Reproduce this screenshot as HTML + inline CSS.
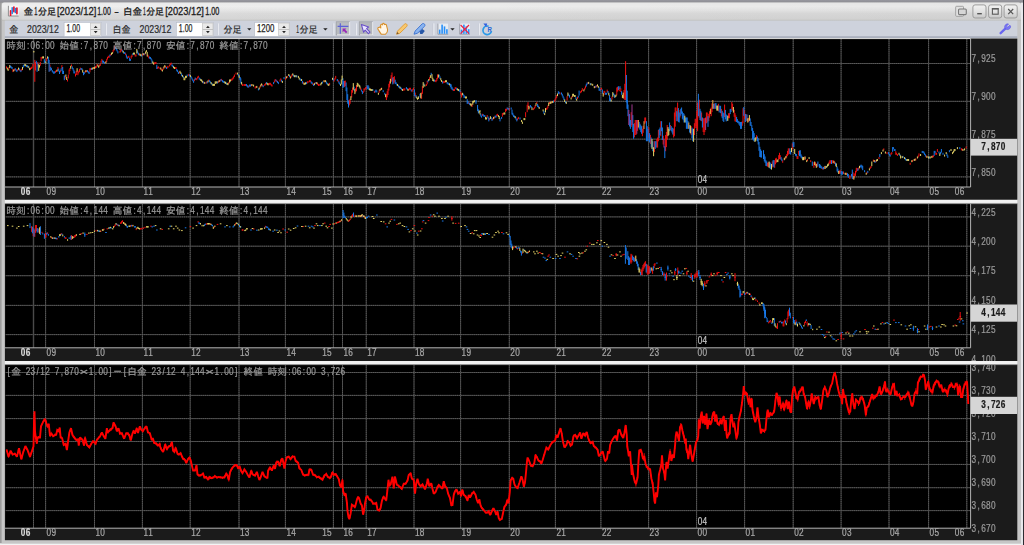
<!DOCTYPE html>
<html lang="ja"><head><meta charset="utf-8"><title>金1分足[2023/12]1.00 - 白金1分足[2023/12]1.00</title>
<style>
html,body{margin:0;padding:0;background:#f2f2f2;width:1024px;height:545px;overflow:hidden}
body{font-family:"Liberation Sans","IPAGothic",sans-serif}
svg{display:block}
#w{position:absolute;left:0;top:0;width:1024px;height:545px;overflow:hidden}
#b{position:absolute;left:-8px;top:-8px;width:1040px;height:561px}
text{white-space:pre}
</style></head><body>
<div id="w"><div id="b"><svg width="1040" height="561" viewBox="-8 -8 1040 561" style="position:absolute;left:0;top:0" font-family="'Liberation Mono','IPAGothic',monospace">
<defs>
<linearGradient id="gt" x1="0" y1="0" x2="0" y2="1"><stop offset="0" stop-color="#ebebeb"/><stop offset="0.22" stop-color="#efefef"/><stop offset="0.45" stop-color="#e5e5e5"/><stop offset="0.62" stop-color="#dbdbdb"/><stop offset="1" stop-color="#d5d5d5"/></linearGradient>
<linearGradient id="gb" x1="0" y1="0" x2="0" y2="1"><stop offset="0" stop-color="#f2f2f2"/><stop offset="0.5" stop-color="#e2e2e2"/><stop offset="1" stop-color="#c8c8c8"/></linearGradient>
<linearGradient id="gh" x1="0" y1="0" x2="1" y2="0"><stop offset="0" stop-color="#000" stop-opacity="0"/><stop offset="1" stop-color="#000" stop-opacity="0.03"/></linearGradient>
<linearGradient id="gtop" x1="0" y1="0" x2="0" y2="1"><stop offset="0" stop-color="#97979f"/><stop offset="1" stop-color="#8d8d92"/></linearGradient>
</defs>
<rect x="-8" y="-8" width="1040" height="561" fill="#f4f4f4"/>
<rect x="-8" y="-8" width="1029" height="551.3" fill="#9c9c9c"/>
<rect x="1.6" y="2.4" width="1019.4" height="540.9" fill="#c6c6c6"/>
<rect x="1021" y="-8" width="2" height="561" fill="#e8e8ec"/>
<rect x="-8" y="-8" width="1031" height="8.2" fill="#97979f"/><rect x="-8" y="0" width="1031" height="2.6" fill="url(#gtop)"/>
<rect x="1023" y="-8" width="9" height="561" fill="#2e2c32"/>
<rect x="1.8" y="2.5" width="1019.2" height="18" rx="2.5" fill="url(#gt)"/>

<rect x="1.8" y="2.5" width="1019.2" height="18" rx="2.5" fill="url(#gh)"/>
<rect x="1.8" y="19.8" width="1019.2" height="0.9" fill="#bdbdb8"/>
<rect x="4.8" y="20.6" width="1012.5" height="17.6" fill="#ced2dc"/>
<rect x="4.8" y="36.2" width="1012.5" height="1.9" fill="#aab0be"/>
<rect x="8.2" y="5.6" width="10.4" height="10.4" fill="#f6f6f6"/>
<path d="M8.4 5.8 V16 H18.6" fill="none" stroke="#8e8e8e" stroke-width="1"/>
<path d="M10.6 10.8 V15.2 M13.9 7 V11.6 M16.9 8 V13.6" stroke="#e8102a" stroke-width="1.7" stroke-linecap="round"/>
<path d="M12.2 7.8 V13.4 M15.4 8.6 V12.6" stroke="#2080e0" stroke-width="1.5" stroke-linecap="round"/>
<text fill="#1c1c1c" stroke="#1c1c1c" stroke-width="0.3" font-family="'Liberation Sans','IPAGothic',sans-serif"><tspan x="23.7" y="14.7" font-size="9.7" textLength="9.3" lengthAdjust="spacingAndGlyphs">金</tspan><tspan x="34.3" y="15.0" font-size="10.6" textLength="3.2" lengthAdjust="spacingAndGlyphs">1</tspan><tspan x="38.0" y="14.7" font-size="9.7" textLength="18.0" lengthAdjust="spacingAndGlyphs">分足</tspan><tspan x="57.0" y="15.0" font-size="10.6" textLength="39.3" lengthAdjust="spacingAndGlyphs">[2023/12]</tspan><tspan x="97.2" y="15.0" font-size="10.6" textLength="13.7" lengthAdjust="spacingAndGlyphs">1.00</tspan> <tspan x="114.2" y="15.0" font-size="10.6" textLength="4.6" lengthAdjust="spacingAndGlyphs">-</tspan> <tspan x="123.0" y="14.7" font-size="9.7" textLength="19.0" lengthAdjust="spacingAndGlyphs">白金</tspan><tspan x="143.1" y="15.0" font-size="10.6" textLength="2.8" lengthAdjust="spacingAndGlyphs">1</tspan><tspan x="146.2" y="14.7" font-size="9.7" textLength="17.8" lengthAdjust="spacingAndGlyphs">分足</tspan><tspan x="165.2" y="15.0" font-size="10.6" textLength="38.7" lengthAdjust="spacingAndGlyphs">[2023/12]</tspan><tspan x="205.2" y="15.0" font-size="10.6" textLength="14.2" lengthAdjust="spacingAndGlyphs">1.00</tspan></text>
<rect x="972.9" y="4.9" width="13.1" height="13.1" rx="2.2" fill="url(#gb)" stroke="#9c9c9c" stroke-width="1"/>
<rect x="988.6" y="4.9" width="13.1" height="13.1" rx="2.2" fill="url(#gb)" stroke="#9c9c9c" stroke-width="1"/>
<rect x="1004.1" y="4.9" width="13.1" height="13.1" rx="2.2" fill="url(#gb)" stroke="#9c9c9c" stroke-width="1"/>
<rect x="977.2" y="13" width="4.6" height="1.4" fill="#555"/>
<rect x="992.4" y="8.8" width="5.8" height="5.4" fill="none" stroke="#5a5a5a" stroke-width="1.1"/><rect x="991.9" y="8" width="6.8" height="1.4" fill="#5a5a5a"/>
<path d="M1008.2 9 L1013.2 14.2 M1013.2 9 L1008.2 14.2" stroke="#555" stroke-width="1.2"/>
<rect x="955.7" y="6.3" width="7.8" height="10" rx="0.8" fill="#e2e2e2" stroke="#9a9a9a" stroke-width="0.9"/>
<rect x="958.5" y="9" width="7.8" height="5.6" rx="1" fill="#d6d6d6" stroke="#7a7a7a" stroke-width="1.1"/>
<text fill="#2a2a2a" stroke="#2a2a2a" stroke-width="0.2" font-family="'Liberation Sans','IPAGothic',sans-serif"><tspan x="9.3" y="32.9" font-size="9.7" textLength="9.0" lengthAdjust="spacingAndGlyphs">金</tspan> <tspan x="27.1" y="33.1" font-size="10.6" textLength="31.7" lengthAdjust="spacingAndGlyphs">2023/12</tspan></text>
<rect x="64.10000000000001" y="22.4" width="37.40" height="13.9" fill="#ffffff" stroke="#b4b9c6" stroke-width="0.6"/>
<text fill="#1e1e1e" stroke="#1e1e1e" stroke-width="0.25" font-family="'Liberation Sans','IPAGothic',sans-serif"><tspan x="66.5" y="32.0" font-size="10.2" textLength="13.5" lengthAdjust="spacingAndGlyphs">1.00</tspan></text>
<rect x="90.60000000000001" y="23.1" width="10.00" height="12.5" fill="#e9e9e9" stroke="#c4c4c4" stroke-width="0.7"/><rect x="90.60000000000001" y="29" width="10.00" height="0.9" fill="#bdbdbd"/><path d="M93.8 28.0 L95.7 25.7 L97.60000000000001 28.0Z M93.8 31.0 L95.7 33.3 L97.60000000000001 31.0Z" fill="#2a2a2a"/>
<rect x="105.60000000000001" y="23.4" width="1.2" height="11.8" fill="#eef0f5"/><rect x="105.10000000000001" y="23.4" width="0.5" height="11.8" fill="#bcc0cc"/>
<text fill="#2a2a2a" stroke="#2a2a2a" stroke-width="0.2" font-family="'Liberation Sans','IPAGothic',sans-serif"><tspan x="112.4" y="32.9" font-size="9.7" textLength="18.0" lengthAdjust="spacingAndGlyphs">白金</tspan> <tspan x="139.5" y="33.1" font-size="10.6" textLength="31.8" lengthAdjust="spacingAndGlyphs">2023/12</tspan></text>
<rect x="176.29999999999998" y="22.4" width="37.20" height="13.9" fill="#ffffff" stroke="#b4b9c6" stroke-width="0.6"/>
<text fill="#1e1e1e" stroke="#1e1e1e" stroke-width="0.25" font-family="'Liberation Sans','IPAGothic',sans-serif"><tspan x="178.8" y="32.0" font-size="10.2" textLength="13.6" lengthAdjust="spacingAndGlyphs">1.00</tspan></text>
<rect x="202.6" y="23.1" width="10.40" height="12.5" fill="#e9e9e9" stroke="#c4c4c4" stroke-width="0.7"/><rect x="202.6" y="29" width="10.40" height="0.9" fill="#bdbdbd"/><path d="M205.99999999999997 28.0 L207.89999999999998 25.7 L209.79999999999998 28.0Z M205.99999999999997 31.0 L207.89999999999998 33.3 L209.79999999999998 31.0Z" fill="#2a2a2a"/>
<rect x="217.6" y="23.4" width="1.2" height="11.8" fill="#eef0f5"/><rect x="217.1" y="23.4" width="0.5" height="11.8" fill="#bcc0cc"/>
<text fill="#2a2a2a" stroke="#2a2a2a" stroke-width="0.2" font-family="'Liberation Sans','IPAGothic',sans-serif"><tspan x="223.6" y="32.9" font-size="9.7" textLength="18.0" lengthAdjust="spacingAndGlyphs">分足</tspan></text>
<path d="M247.2 28.2 H251.4 L249.3 30.599999999999998Z" fill="#222"/>
<rect x="254.7" y="22.4" width="34.80" height="13.9" fill="#ffffff" stroke="#b4b9c6" stroke-width="0.6"/>
<text fill="#1e1e1e" stroke="#1e1e1e" stroke-width="0.25" font-family="'Liberation Sans','IPAGothic',sans-serif"><tspan x="257.0" y="31.9" font-size="10.2" textLength="17.4" lengthAdjust="spacingAndGlyphs">1200</tspan></text>
<rect x="278.59999999999997" y="23.1" width="10.60" height="12.5" fill="#e9e9e9" stroke="#c4c4c4" stroke-width="0.7"/><rect x="278.59999999999997" y="29" width="10.60" height="0.9" fill="#bdbdbd"/><path d="M282.1 28.0 L284.0 25.7 L285.9 28.0Z M282.1 31.0 L284.0 33.3 L285.9 31.0Z" fill="#2a2a2a"/>
<text fill="#2a2a2a" stroke="#2a2a2a" stroke-width="0.2" font-family="'Liberation Sans','IPAGothic',sans-serif"><tspan x="296.2" y="33.1" font-size="10.6" textLength="2.8" lengthAdjust="spacingAndGlyphs">1</tspan><tspan x="299.6" y="32.9" font-size="9.7" textLength="18.0" lengthAdjust="spacingAndGlyphs">分足</tspan></text>
<path d="M323.2 28.2 H327.6 L325.4 30.599999999999998Z" fill="#222"/>
<rect x="333.2" y="23.4" width="1.2" height="11.8" fill="#eef0f5"/><rect x="332.7" y="23.4" width="0.5" height="11.8" fill="#bcc0cc"/>
<rect x="336.2" y="21.8" width="13.2" height="13.2" fill="#b9bcc0" stroke="#9a9ca2" stroke-width="0.7"/>
<rect x="337" y="34.4" width="12.6" height="0.9" fill="#eef0f4"/><rect x="349.2" y="22" width="0.9" height="13" fill="#eef0f4"/>
<path d="M340.3 23.2 V33.8 M337.6 26.4 H348.4" stroke="#5a60d8" stroke-width="1.1" fill="none"/>
<path d="M342.6 28.6 H346.4 L345.2 29.8 L347.4 32 L346 33.2 L343.9 31 L342.6 32.2Z" fill="#9a28b8"/>
<rect x="355.59999999999997" y="23.4" width="1.2" height="11.8" fill="#eef0f5"/><rect x="355.09999999999997" y="23.4" width="0.5" height="11.8" fill="#bcc0cc"/>
<rect x="359.2" y="21.8" width="13.2" height="13.2" fill="#b4b7bc" stroke="#9a9ca2" stroke-width="0.7"/>
<rect x="360" y="34.4" width="12.6" height="0.9" fill="#eef0f4"/><rect x="372.2" y="22" width="0.9" height="13" fill="#eef0f4"/>
<path d="M361.4 24.6 L368.6 27 L366.6 28.6 L370 32.2 L368.4 33.6 L365.2 30.2 L363.6 32.2Z" fill="#e8e4ff" stroke="#6a50c8" stroke-width="1.1" stroke-linejoin="round"/>
<path d="M378.6 27.6 C379.6 26.6 380.4 27.2 380.8 28 L380.6 25.2 C380.8 24 382.2 24 382.4 25 L382.6 24 C383 23 384.4 23.2 384.4 24.4 L384.8 24.6 C385.6 24 386.6 24.6 386.6 25.8 L387.6 29.6 C387.8 31.6 386.8 33.2 385.6 34.2 H381.2 C380 32.6 379 30.6 377.8 29 C377.6 28.4 378 27.8 378.6 27.6Z" fill="#fff6e6" stroke="#d8902c" stroke-width="1.1" stroke-linejoin="round"/>
<path d="M396.6 34.2 L397.4 31.2 L404.4 24.2 C405.2 23.4 406.4 23.6 406.8 24.4 C407.4 25.2 407.2 26 406.6 26.6 L399.6 33.4 Z" fill="#f8c870" stroke="#e09a30" stroke-width="0.9" stroke-linejoin="round"/>
<path d="M396.6 34.2 L397.2 32 L398.8 33.6Z" fill="#705030"/>
<path d="M414 34.2 L415.2 31 L422 24 C422.8 23.2 424 23.4 424.6 24.2 C425.2 25 425 25.8 424.4 26.4 L417.6 33.2 Z" fill="#8ab4f0" stroke="#3a70d0" stroke-width="0.9" stroke-linejoin="round"/>
<path d="M419.6 31.6 L422.4 29 L424.8 31 L422.4 34 H420.2Z" fill="#2858a8"/>
<rect x="433.2" y="23.4" width="1.2" height="11.8" fill="#eef0f5"/><rect x="432.7" y="23.4" width="0.5" height="11.8" fill="#bcc0cc"/>
<rect x="437.6" y="23.6" width="10.4" height="10.6" fill="#e8ecf2"/><path d="M437.90000000000003 23.6 V34.2 H448.20000000000005" fill="none" stroke="#8a8e98" stroke-width="0.8"/><rect x="438.90" y="29.60" width="1.6" height="4.2" fill="#2890f8"/><rect x="441.30" y="24.60" width="1.6" height="9.2" fill="#2890f8"/><rect x="443.70" y="26.40" width="1.6" height="7.4" fill="#2890f8"/><rect x="446.10" y="29.20" width="1.6" height="4.6" fill="#2890f8"/>
<path d="M450.3 28.2 H454.7 L452.5 30.599999999999998Z" fill="#222"/>
<rect x="459.4" y="23.6" width="10.4" height="10.6" fill="#e8ecf2"/><path d="M459.7 23.6 V34.2 H470.0" fill="none" stroke="#8a8e98" stroke-width="0.8"/><rect x="460.70" y="29.60" width="1.6" height="4.2" fill="#2890f8"/><rect x="463.10" y="24.60" width="1.6" height="9.2" fill="#2890f8"/><rect x="465.50" y="26.40" width="1.6" height="7.4" fill="#2890f8"/><rect x="467.90" y="29.20" width="1.6" height="4.6" fill="#2890f8"/>
<path d="M460.6 25 L469 33.6 M469 25 L460.6 33.6" stroke="#f02040" stroke-width="1.2"/>
<rect x="478.59999999999997" y="23.4" width="1.2" height="11.8" fill="#eef0f5"/><rect x="478.09999999999997" y="23.4" width="0.5" height="11.8" fill="#bcc0cc"/>
<path d="M488.6 26.2 A4.3 4.3 0 1 0 491.4 31.6" fill="none" stroke="#2a9ae8" stroke-width="1.7"/>
<path d="M483.4 23.4 L487.2 23.6 L486.2 27.2Z" fill="#3060e0"/>
<text x="487.6" y="31.8" font-size="6.6" fill="#2868d8" font-weight="bold" font-family="'Liberation Sans','IPAGothic',sans-serif" textLength="4.4" lengthAdjust="spacingAndGlyphs">R</text>
<path d="M1000.6 33.2 L1005.6 28.4" stroke="#6a66f0" stroke-width="2.3" stroke-linecap="round"/>
<path d="M1009.8 25.2 L1007.8 27.2 L1006.6 26 L1008.6 24 A3 3 0 0 0 1004.8 27.8 A3 3 0 0 0 1009.8 28.6 A3 3 0 0 0 1010.6 26Z" fill="#7a76f4" stroke="#5a56e0" stroke-width="0.6"/>
<rect x="4.9" y="199.6" width="1012.4" height="3.3" fill="#f2f2f2"/>
<rect x="4.9" y="360.9" width="1012.4" height="3.3" fill="#f2f2f2"/>

<rect x="4.9" y="38.6" width="1012.40" height="161.10" fill="#1b1b1b"/>
<rect x="5.5" y="38.6" width="965.10" height="148.40" fill="#000"/>
<clipPath id="cp0"><rect x="5.5" y="38.6" width="965.10" height="148.40"/></clipPath>
<g clip-path="url(#cp0)">
<path d="M5.5 63.5H970.6M5.5 101.35H970.6M5.5 139.15H970.6M5.5 176.9H970.6M33.5 38.6V187.0M45.6 38.6V187.0M94.5 38.6V187.0M142.4 38.6V187.0M190.2 38.6V187.0M239.0 38.6V187.0M285.4 38.6V187.0M333.4 38.6V187.0M342.5 38.6V187.0M366.25 38.6V187.0M414.0 38.6V187.0M460.6 38.6V187.0M509.3 38.6V187.0M555.4 38.6V187.0M600.9 38.6V187.0M648.6 38.6V187.0M696.6 38.6V187.0M744.6 38.6V187.0M793.2 38.6V187.0M841.1 38.6V187.0M889.0 38.6V187.0M928.6 38.6V187.0M966.8 38.6V187.0" stroke="#404040" stroke-width="1.0" fill="none"/>
<path d="M5.5 63.5H970.6M5.5 101.35H970.6M5.5 139.15H970.6M5.5 176.9H970.6M33.5 38.6V187.0M45.6 38.6V187.0M94.5 38.6V187.0M142.4 38.6V187.0M190.2 38.6V187.0M239.0 38.6V187.0M285.4 38.6V187.0M333.4 38.6V187.0M342.5 38.6V187.0M366.25 38.6V187.0M414.0 38.6V187.0M460.6 38.6V187.0M509.3 38.6V187.0M555.4 38.6V187.0M600.9 38.6V187.0M648.6 38.6V187.0M696.6 38.6V187.0M744.6 38.6V187.0M793.2 38.6V187.0M841.1 38.6V187.0M889.0 38.6V187.0M928.6 38.6V187.0M966.8 38.6V187.0" stroke="#606060" stroke-width="0.9" stroke-dasharray="1.05 1.05" fill="none"/>
<path d="M33.5 38.6V187.0" stroke="#4a4a4a" stroke-width="1.4" fill="none"/>
</g>
<g clip-path="url(#cp0)" fill="none" stroke-width="1.0">
<path stroke="#f01010" d="M6.5 66.4V68.4M8.9 67.3V69.5M12.9 68.9V72.1M14.5 68.7V70.7M17.7 69.0V71.0M20.1 69.4V71.4M21.7 68.9V70.9M30.5 67.8V69.8M31.3 67.0V69.0M32.1 66.4V68.4M32.9 63.9V66.6M34.8 59.9V81.8M35.5 62.0V70.5M37.9 62.0V66.5M40.3 62.0V65.8M41.1 57.0V61.3M41.9 56.8V58.8M46.7 57.9V61.1M49.9 64.6V71.3M55.5 70.8V72.8M56.3 70.0V72.0M57.9 67.0V69.7M60.3 70.1V72.4M61.9 65.1V69.1M65.1 75.9V78.8M67.5 79.3V81.5M68.3 74.5V78.5M69.1 69.5V74.3M69.9 68.0V71.1M71.5 64.5V66.5M75.5 73.6V76.5M76.3 70.9V75.0M77.9 70.6V75.2M78.7 71.4V73.4M79.5 69.0V72.1M80.3 67.6V69.7M85.1 70.9V72.9M86.7 70.1V72.1M89.9 68.2V72.3M90.7 68.1V70.1M93.1 67.4V69.4M95.5 66.1V68.1M96.3 65.8V67.8M97.1 63.9V66.0M99.5 64.6V66.6M100.3 63.9V65.9M101.1 60.8V63.6M101.9 58.9V61.5M105.1 61.7V63.7M106.7 58.8V62.1M107.5 57.0V59.5M108.3 55.8V57.8M109.1 55.8V57.8M110.7 53.9V55.9M113.1 50.1V52.5M113.9 48.9V50.9M114.7 45.8V49.1M120.0 50.8V52.8M120.8 50.0V52.0M121.6 48.9V50.9M125.6 53.2V55.2M128.0 56.1V58.1M128.8 55.8V57.8M131.2 55.8V58.7M132.0 54.5V57.1M135.2 54.4V56.5M136.0 54.5V56.5M139.2 53.2V55.2M142.4 53.7V55.7M144.8 53.2V55.2M148.0 54.7V57.1M148.8 56.4V58.4M154.4 62.4V64.4M155.2 62.0V64.0M156.0 62.0V64.0M157.6 66.8V68.8M158.4 66.4V68.4M160.0 67.2V69.2M161.6 68.8V70.8M163.2 67.5V69.9M165.6 65.9V67.9M167.2 66.5V68.5M168.0 65.8V67.8M169.6 64.5V66.5M170.4 63.3V65.3M171.2 62.6V64.6M175.2 67.0V69.0M176.0 67.0V69.0M179.2 71.6V73.6M188.8 73.9V75.9M194.4 79.1V81.2M196.0 78.0V80.0M196.8 78.2V80.2M197.6 76.6V78.6M198.4 75.8V77.8M204.0 81.7V83.7M206.4 81.5V83.5M208.8 79.5V81.5M218.4 80.8V82.8M220.0 79.7V81.7M221.6 78.9V80.9M228.8 81.9V83.9M231.2 78.9V80.9M232.0 78.5V80.5M232.8 77.6V79.6M233.6 76.4V78.6M234.4 74.5V77.1M236.0 72.6V74.6M242.4 83.8V86.0M244.0 84.0V86.0M244.8 84.0V86.0M245.6 84.0V86.0M248.8 85.4V87.4M251.2 84.2V86.2M255.2 86.5V88.5M256.0 86.2V88.2M260.0 85.9V88.2M262.4 84.4V86.4M264.8 84.0V86.0M265.6 82.9V84.9M268.8 83.2V85.2M269.6 82.8V84.8M270.4 82.8V84.8M271.2 83.9V85.9M272.0 84.6V86.6M274.4 80.5V82.6M275.2 79.0V81.2M276.8 80.2V82.2M280.0 79.6V81.6M280.8 78.4V80.4M285.6 77.8V79.8M287.2 75.9V77.9M291.2 75.5V77.5M292.0 74.2V76.2M303.2 81.8V83.8M307.2 81.5V83.5M308.0 80.9V82.9M309.6 80.2V82.2M310.4 80.2V82.2M312.8 83.0V85.0M315.2 82.1V84.1M317.6 82.8V84.8M318.4 84.0V86.0M319.2 83.9V85.9M324.8 80.2V82.2M329.6 82.9V84.9M334.1 79.6V81.6M334.9 77.9V80.1M335.7 75.9V78.6M338.1 79.9V82.0M344.5 80.9V86.9M345.3 80.6V86.2M349.3 99.9V105.4M350.1 98.8V103.8M351.7 90.0V97.5M352.5 87.5V92.7M355.7 88.1V92.5M356.5 85.0V91.2M360.8 87.8V90.2M363.2 91.1V93.1M364.0 88.4V91.8M364.8 88.4V90.4M365.6 87.2V89.2M366.4 86.5V88.5M374.4 90.9V92.9M379.2 90.3V92.8M380.8 88.1V90.1M386.4 93.8V100.0M387.2 91.2V97.4M388.0 88.8V95.0M388.8 83.8V90.6M389.6 81.3V87.4M391.2 75.1V81.8M392.0 72.5V81.2M393.6 77.0V83.7M394.4 76.2V82.5M403.2 88.8V90.8M404.0 88.4V90.4M404.8 88.4V90.4M408.8 88.5V90.5M409.6 87.8V89.8M410.4 87.8V89.8M412.0 90.2V92.2M412.8 88.8V90.8M413.6 87.8V89.8M415.2 92.6V96.7M421.6 92.5V98.8M422.4 86.2V93.8M426.4 84.0V86.0M427.2 80.9V84.3M429.6 77.2V80.0M435.2 79.9V81.9M436.0 80.2V82.2M436.8 78.1V81.0M437.6 74.4V79.2M443.2 81.3V83.3M444.0 80.9V82.9M444.8 80.9V82.9M453.6 89.0V91.0M454.4 89.0V91.0M455.2 87.1V89.2M456.0 87.1V89.1M460.8 91.3V94.6M461.6 93.5V97.5M468.8 102.1V104.1M472.0 103.8V106.9M482.4 113.8V115.9M487.2 115.0V117.5M489.6 118.2V120.2M492.8 118.1V120.1M494.4 116.4V118.4M496.8 114.3V116.3M497.6 113.8V115.8M502.4 113.1V116.7M503.2 112.9V114.9M505.6 108.8V112.2M506.4 108.8V110.8M508.0 107.7V109.7M509.6 108.1V110.1M517.6 118.3V120.3M518.4 116.9V119.0M525.6 112.2V117.3M527.2 104.8V112.2M528.0 102.2V107.2M529.6 106.6V108.6M533.6 108.1V110.1M534.4 106.8V108.8M535.2 105.0V107.5M536.8 101.9V103.9M546.3 107.9V109.9M547.1 107.5V109.5M547.9 105.3V108.2M549.5 102.2V104.2M551.9 101.2V103.2M554.3 100.0V102.0M555.1 98.8V100.8M555.9 97.4V99.7M556.7 95.0V98.1M559.9 92.5V94.5M567.1 96.2V100.5M571.9 96.2V98.2M577.5 96.8V99.0M580.7 91.2V93.2M581.5 90.2V92.2M582.3 88.1V90.9M584.7 87.7V90.0M585.5 85.6V88.4M587.9 82.2V84.2M595.1 86.0V88.0M596.7 85.2V87.2M600.8 88.3V90.3M601.6 87.8V89.8M604.0 90.9V95.1M604.8 90.9V92.9M607.2 89.6V92.4M612.0 96.5V99.6M616.8 87.5V95.3M617.6 86.8V91.6M619.2 87.5V91.2M620.8 88.3V92.0M624.0 90.0V98.8M624.8 83.8V100.0M625.6 61.2V100.0M631.2 112.2V126.9M634.4 123.1V137.3M635.2 120.0V135.0M636.0 120.0V135.0M637.6 120.0V130.8M642.4 128.8V136.2M643.2 125.8V132.8M644.8 117.5V123.9M645.6 117.5V122.5M648.8 127.5V137.5M650.4 134.9V144.0M654.4 141.2V152.1M656.8 139.1V147.5M657.6 137.5V147.5M658.4 130.0V141.3M660.8 121.2V136.2M663.2 135.7V144.5M665.6 135.0V151.2M666.4 132.0V147.1M667.2 125.0V139.3M670.4 125.0V130.0M673.6 128.8V137.5M674.4 112.5V136.2M675.2 107.5V126.7M676.0 107.5V116.5M677.6 102.5V121.2M680.0 110.0V117.5M691.2 126.2V135.0M694.4 123.2V135.0M695.2 118.8V128.2M696.0 118.8V126.2M696.8 111.0V128.6M697.6 102.5V131.2M699.2 99.7V117.7M701.6 112.5V121.2M703.2 118.2V132.0M704.0 118.8V135.0M704.8 118.0V132.1M706.4 112.5V123.3M707.2 112.5V122.5M708.8 113.8V121.2M709.6 111.2V117.7M711.2 107.5V116.2M712.0 103.4V112.1M714.4 103.6V108.8M718.4 103.8V111.2M721.4 108.9V116.4M724.6 104.5V117.0M728.6 113.2V118.2M729.4 113.2V118.2M731.8 102.0V109.5M732.6 103.8V110.6M734.2 109.9V116.8M735.0 113.2V121.4M735.8 115.3V121.7M742.2 121.4V125.8M743.0 108.2V123.3M744.6 110.4V118.8M746.2 114.2V121.3M748.6 117.8V121.9M756.6 135.1V138.9M767.5 162.8V166.5M768.3 162.2V167.0M772.3 161.4V167.4M774.7 160.2V167.8M775.5 158.5V164.3M776.3 157.8V162.8M778.7 155.2V160.1M779.5 152.8V159.0M780.3 155.2V159.4M782.7 160.2V162.8M785.1 157.0V159.5M786.7 154.1V157.5M787.5 150.9V155.9M788.3 148.4V154.6M789.1 148.4V154.2M792.3 143.4V149.5M797.1 155.9V159.0M797.9 155.9V159.0M798.7 150.9V155.4M804.3 156.7V159.8M807.5 159.2V161.1M810.7 160.2V162.1M813.9 162.1V167.8M815.5 162.3V166.1M817.1 163.1V167.3M822.7 167.8V169.6M824.3 166.3V169.1M829.1 161.7V164.6M829.9 160.2V163.4M830.7 160.2V163.7M832.3 160.2V163.4M833.1 160.2V162.8M834.7 161.5V164.0M839.5 170.6V173.7M840.3 170.2V173.4M843.5 171.5V174.0M846.7 172.8V175.2M849.9 175.2V179.0M853.1 172.4V179.2M854.7 173.4V177.5M855.5 170.9V175.9M856.3 167.8V172.3M857.1 168.0V170.9M858.7 167.5V169.8M867.0 171.8V173.8M870.2 166.9V168.9M871.0 165.9V167.9M873.4 159.6V161.6M875.8 160.3V162.3M879.0 157.1V159.1M883.8 148.4V150.4M887.0 152.1V154.1M891.0 152.9V155.0M891.8 152.1V154.1M895.8 151.2V154.8M896.6 152.8V154.8M897.4 154.0V156.0M910.2 162.8V164.8M912.6 159.9V161.9M915.8 158.4V160.4M918.2 155.5V157.5M919.0 153.4V156.2M926.2 155.4V157.4M932.6 155.6V157.6M933.4 155.2V157.2M935.8 152.6V154.8M936.6 152.8V154.8M937.4 149.0V151.9M961.4 148.2V150.2M962.2 148.7V150.7M966.2 146.5V148.5"/>
<path stroke="#1878e8" d="M10.5 65.6V67.6M11.3 66.4V68.4M12.1 67.0V69.0M15.3 68.2V70.2M16.1 69.3V71.3M16.9 70.1V72.1M19.3 68.4V70.4M20.9 70.1V72.1M23.3 65.1V67.7M24.1 64.5V66.5M26.5 65.1V67.1M27.3 65.1V67.1M28.9 66.4V68.4M36.3 60.8V63.3M37.1 62.6V71.8M44.3 59.2V62.8M45.1 61.1V63.1M48.3 56.8V63.0M49.1 59.9V71.8M50.7 66.8V70.7M51.5 68.2V70.2M52.3 70.0V72.1M53.1 71.1V73.1M53.9 72.0V74.0M54.7 71.3V73.3M58.7 68.6V71.5M59.5 70.8V74.0M61.1 68.4V71.2M62.7 67.0V74.0M63.5 70.8V74.0M64.3 75.4V80.2M72.3 66.4V69.0M73.1 68.0V70.5M73.9 69.8V73.4M74.7 71.4V73.4M81.1 68.0V70.0M81.9 68.2V70.2M83.5 71.9V75.2M84.3 72.2V74.2M87.5 70.1V72.1M88.3 71.2V73.2M89.1 72.0V74.0M91.5 67.9V69.9M102.7 60.3V62.8M103.5 60.8V62.8M104.3 62.0V64.0M109.9 54.6V56.6M115.5 46.8V48.8M116.3 48.1V50.4M117.1 49.5V51.5M117.9 51.2V53.4M122.4 49.7V51.7M124.0 52.0V54.0M124.8 52.0V54.0M126.4 54.5V57.6M127.2 56.9V59.0M129.6 57.7V60.9M130.4 58.9V60.9M132.8 53.2V55.2M137.6 50.5V53.4M138.4 52.7V55.2M141.6 54.5V56.5M144.0 53.2V55.2M149.6 56.6V58.6M150.4 57.0V59.0M151.2 58.2V60.3M152.0 59.6V62.8M156.8 64.8V69.0M166.4 67.0V69.0M172.0 64.3V66.3M172.8 65.1V67.1M176.8 69.0V71.3M177.6 70.1V72.1M178.4 71.9V74.0M181.6 73.4V75.9M183.2 75.8V77.8M187.2 74.5V76.5M189.6 74.3V76.3M191.2 76.3V78.3M192.0 77.6V79.6M192.8 79.1V81.2M193.6 80.5V82.8M195.2 77.6V79.8M199.2 77.5V79.6M200.0 78.2V80.2M203.2 81.4V83.4M207.2 81.4V83.4M209.6 80.2V82.2M210.4 81.4V83.4M212.0 83.2V85.2M217.6 81.4V83.4M220.8 79.2V81.2M222.4 80.0V82.0M223.2 80.8V82.8M224.0 81.0V83.0M226.4 82.6V84.6M238.4 74.1V76.5M240.0 77.2V80.2M240.0 77.1V79.1M240.8 78.4V83.5M246.4 84.0V86.0M247.2 85.0V87.0M248.0 85.9V87.9M249.6 84.6V86.6M250.4 84.6V86.6M258.4 88.4V90.4M263.2 85.2V87.2M266.4 82.1V84.1M273.6 82.1V84.1M276.0 79.6V81.6M277.6 81.0V83.0M278.4 82.1V84.1M281.6 79.7V81.7M284.0 77.1V79.1M289.6 75.1V77.1M293.6 74.5V76.5M295.2 75.2V77.2M296.8 75.4V77.4M300.0 78.4V80.4M300.8 78.8V80.8M302.4 80.9V83.5M306.4 82.1V84.1M311.2 81.4V83.4M312.0 82.1V84.1M313.6 84.0V86.0M316.0 82.1V84.1M322.4 81.5V83.5M326.4 81.5V83.8M327.2 82.8V84.8M333.3 78.7V80.7M337.3 79.0V81.0M338.9 81.3V83.5M339.7 82.6V84.6M342.9 78.3V87.5M343.7 81.2V87.5M346.1 82.5V91.2M346.9 87.5V100.0M347.7 94.2V103.8M348.5 100.5V107.5M354.1 86.7V90.9M361.6 89.5V91.6M362.4 91.1V94.1M367.2 85.7V88.9M368.0 85.0V89.4M368.8 86.4V89.8M372.8 89.0V91.0M375.2 90.5V92.5M376.0 89.6V91.6M376.8 90.5V92.5M383.2 90.2V92.2M384.8 92.8V94.8M392.8 77.5V84.4M395.2 79.7V84.1M396.0 82.1V84.1M396.8 83.5V85.5M398.4 85.2V87.2M399.2 85.9V87.9M400.8 87.1V89.1M401.6 88.1V90.1M406.4 87.1V89.1M407.2 88.1V90.1M411.2 89.3V91.3M414.4 89.5V96.2M416.0 95.0V97.9M420.0 93.8V97.5M424.0 83.5V85.5M428.0 80.3V82.3M431.2 72.8V75.6M434.4 79.6V81.6M439.2 74.6V76.6M440.0 76.4V78.9M442.4 81.3V83.5M447.2 82.0V84.1M448.0 82.5V84.5M448.8 83.0V85.0M450.4 83.9V87.2M451.2 84.4V88.8M452.0 86.8V89.7M452.8 88.4V90.4M456.8 88.0V90.0M459.2 89.4V91.4M460.0 90.2V92.2M463.2 93.6V95.6M464.0 94.9V97.9M464.8 95.9V97.9M467.2 99.2V103.8M468.0 101.1V103.9M469.6 102.8V104.8M476.0 100.0V103.8M477.6 105.0V111.2M478.4 109.4V113.5M480.8 113.8V116.5M481.6 115.6V117.6M483.2 114.1V116.1M484.0 115.0V117.0M484.8 115.0V117.0M488.0 116.5V118.5M488.8 117.8V121.4M491.2 117.1V119.1M492.0 118.4V120.8M495.2 115.6V117.6M496.0 115.6V117.6M500.0 118.3V121.4M501.6 116.9V118.9M507.2 107.5V109.5M508.8 107.9V109.9M511.2 107.5V109.5M512.0 109.6V114.5M512.8 112.8V115.4M513.6 114.7V117.0M514.4 115.5V117.5M516.0 117.5V119.7M516.8 119.0V121.4M520.0 117.5V119.5M530.4 105.0V107.3M531.2 106.1V108.1M537.6 103.9V107.0M538.4 105.7V107.7M543.9 110.7V113.8M553.5 100.6V102.6M558.3 91.2V94.2M559.1 91.8V93.8M561.5 92.5V94.5M562.3 93.8V96.4M563.1 95.7V98.2M563.9 97.5V100.1M565.5 101.2V103.2M568.7 93.6V95.6M569.5 94.9V97.6M575.9 97.1V99.5M578.3 95.6V97.6M579.1 90.6V95.5M586.3 83.9V86.6M587.1 82.5V84.6M590.3 83.1V85.1M595.9 85.6V87.6M599.1 87.2V90.8M600.0 89.0V91.0M602.4 89.5V93.6M605.6 92.7V94.8M606.4 92.8V94.8M608.0 91.0V93.5M609.6 94.9V101.2M610.4 98.0V101.4M613.6 93.2V95.2M614.4 94.5V97.9M618.4 86.2V90.0M620.0 86.2V88.9M621.6 91.2V94.8M626.4 75.0V102.5M627.2 90.7V108.8M627.2 100.0V108.8M628.0 104.6V116.2M629.6 114.0V126.5M630.4 120.0V128.8M632.8 115.1V132.1M633.6 123.9V138.8M639.2 121.9V128.7M640.0 123.8V130.0M640.8 125.2V132.1M641.6 126.2V133.8M646.4 121.2V141.2M647.2 126.2V141.2M648.0 128.8V141.2M649.6 133.2V142.5M651.2 137.5V147.5M652.8 141.2V151.2M655.2 141.2V149.0M656.0 141.2V147.5M659.2 129.0V138.0M660.0 127.5V135.0M661.6 121.2V131.2M662.4 127.5V140.0M664.8 146.2V158.1M669.6 122.5V131.2M671.2 126.0V131.0M672.0 127.5V132.5M672.8 128.0V134.5M676.8 111.2V121.2M678.4 108.1V121.9M679.2 112.5V122.5M680.8 108.8V115.7M681.6 107.5V113.8M682.4 111.5V118.8M683.2 113.0V120.2M684.0 113.8V122.5M685.6 117.5V122.5M686.4 117.5V128.8M687.2 117.5V128.8M688.0 121.1V128.8M689.6 125.0V132.5M692.0 127.6V138.3M692.8 128.8V141.2M698.4 93.8V116.2M700.0 108.8V120.0M700.8 110.9V120.7M702.4 117.5V127.5M708.0 116.2V126.9M713.6 103.8V108.8M715.2 103.1V108.8M716.0 103.1V108.8M719.2 105.6V112.5M720.6 105.8V113.2M722.2 110.8V118.2M723.0 112.5V120.9M723.8 113.2V122.0M725.4 109.9V119.3M726.2 114.5V121.4M727.0 115.3V121.0M730.2 108.9V114.1M731.0 108.9V112.0M736.6 117.0V122.0M737.4 119.1V122.7M738.2 120.8V123.2M739.0 121.4V124.6M739.8 122.0V125.8M740.6 122.0V128.9M741.4 122.0V128.9M743.8 107.0V115.8M745.4 113.9V122.0M747.0 114.5V120.8M750.2 118.4V125.8M751.0 122.0V125.8M751.8 125.1V130.8M752.6 128.0V139.5M753.4 130.9V140.5M754.2 133.2V141.4M757.4 136.5V141.3M758.2 138.2V144.5M759.0 142.0V150.8M759.8 146.8V157.0M760.6 149.3V157.3M761.4 150.8V157.6M763.5 150.2V159.0M764.3 154.2V161.4M765.1 156.5V162.8M765.9 160.2V165.9M766.7 161.4V166.2M769.9 162.2V168.3M770.7 163.3V169.1M773.1 160.2V166.5M773.9 160.2V167.4M781.1 157.1V159.6M781.9 158.7V161.2M789.9 148.4V154.0M790.7 150.9V154.6M793.1 142.1V147.1M793.9 142.1V147.1M795.5 153.6V155.7M796.3 154.0V156.5M799.5 150.5V156.1M800.3 150.2V156.5M801.1 154.4V157.8M801.9 155.9V158.6M812.3 161.5V165.9M817.9 161.5V166.5M819.5 164.0V167.8M820.3 164.7V168.0M821.1 165.9V168.4M821.9 166.7V168.9M823.5 167.0V169.4M825.9 165.9V168.2M831.5 160.2V164.0M835.5 162.6V165.9M837.1 166.5V171.5M837.9 168.7V172.6M841.1 170.9V174.4M841.9 171.5V175.2M842.7 171.5V174.6M847.5 173.2V176.2M848.3 174.0V177.8M851.5 174.0V176.5M852.3 169.6V179.0M857.9 168.4V170.9M860.3 165.4V167.5M861.1 164.6V167.1M861.9 165.2V168.5M862.7 165.9V170.2M864.6 170.2V172.2M867.8 170.9V172.9M875.0 160.9V162.9M879.8 154.0V157.1M888.6 152.1V154.1M889.4 153.7V155.7M890.2 154.6V156.6M892.6 147.1V151.8M893.4 147.1V149.1M894.2 148.9V151.0M895.0 149.0V151.0M899.8 154.1V156.1M903.0 155.9V157.9M905.4 157.9V159.9M906.2 159.0V161.0M922.2 150.9V152.9M923.0 151.1V153.1M923.8 151.5V153.5M924.6 152.7V155.0M925.4 154.3V156.6M929.4 156.5V158.5M934.2 150.9V155.8M935.0 150.9V153.0M939.0 151.5V153.5M940.6 151.9V154.3M941.4 149.0V152.6M943.0 152.8V154.8M947.0 153.5V156.1M947.8 155.4V157.9M949.4 150.2V152.2M959.8 147.1V149.1"/>
<path stroke="#e6d468" d="M7.3 67.6V69.6M8.1 68.9V70.9M9.7 65.1V68.0M13.7 69.5V71.5M18.5 67.6V69.7M22.5 67.0V69.8M24.9 63.9V65.9M25.7 64.3V66.3M28.1 65.9V67.9M29.7 67.9V70.2M33.0 51.8h1.6M38.7 64.2V70.9M39.5 65.1V67.6M42.7 56.4V58.4M43.5 56.4V58.4M45.9 61.4V63.4M47.5 56.4V58.6M57.1 69.5V71.5M65.9 74.5V76.6M66.7 76.8V80.0M70.7 65.8V68.7M77.1 68.2V71.6M82.7 69.7V72.6M85.9 70.1V72.1M92.3 67.6V69.6M93.9 67.0V69.0M94.7 67.0V69.0M97.9 64.6V66.6M98.7 65.8V67.8M105.9 61.4V63.4M111.5 52.8V54.8M112.3 52.0V54.0M123.2 50.8V52.8M133.6 52.6V54.6M134.4 52.6V54.6M136.8 48.9V53.5M140.0 53.7V55.7M140.8 54.2V56.2M143.2 53.2V55.2M145.6 51.5V53.8M146.4 50.1V52.2M147.2 51.9V56.5M152.8 61.4V63.4M153.6 62.6V64.6M160.8 67.6V69.6M162.4 69.5V71.5M164.0 66.4V68.4M164.8 65.1V67.1M173.6 66.2V68.2M174.4 67.0V69.0M180.0 70.8V72.8M180.8 72.1V74.1M182.4 74.9V76.9M184.0 77.2V80.2M184.8 78.2V80.2M185.6 75.8V78.3M186.4 75.8V77.8M190.4 75.1V77.1M200.8 79.0V81.0M201.6 79.5V81.5M202.4 80.7V82.7M204.8 82.0V84.0M208.0 80.4V82.4M211.2 82.2V84.2M212.8 83.9V85.9M213.6 83.9V85.9M214.4 83.9V85.9M215.2 81.4V84.0M216.0 81.4V83.4M216.8 81.4V83.4M219.2 80.1V82.1M224.8 81.4V83.4M225.6 81.9V83.9M227.2 82.9V84.9M228.0 83.2V85.2M229.6 79.5V82.6M230.4 79.5V81.5M237.6 72.6V74.6M239.2 75.3V77.9M241.6 81.9V84.5M252.0 84.0V86.0M253.6 84.6V86.6M256.8 85.9V87.9M259.2 87.5V89.5M260.8 84.5V86.6M261.6 83.4V85.4M267.2 82.8V84.8M268.0 83.4V85.4M282.4 80.9V82.9M286.4 76.4V78.4M288.8 74.0V76.0M290.4 76.4V78.5M292.8 73.4V75.4M294.4 75.2V77.2M296.0 75.2V77.2M298.4 75.9V77.9M299.2 77.5V79.5M301.6 79.0V81.0M304.0 82.8V84.8M304.8 82.8V84.8M305.6 82.3V84.3M314.4 83.2V85.2M316.8 82.1V84.1M320.8 83.4V85.4M321.6 82.2V84.2M324.0 80.2V82.2M325.6 80.2V82.2M328.0 83.5V85.5M328.8 84.0V86.0M332.5 77.8V79.8M340.5 83.9V86.0M341.3 79.5V84.5M342.1 75.6V80.0M350.9 96.2V100.0M353.3 83.1V89.7M354.9 89.1V94.1M357.3 82.8V86.9M358.1 83.5V85.5M358.9 84.6V86.6M359.7 85.2V87.2M360.0 86.5V88.5M369.6 88.4V90.4M370.4 88.6V90.6M371.2 89.0V91.0M372.0 89.0V91.0M378.4 92.8V94.8M380.0 89.0V91.0M381.6 87.8V89.8M385.6 94.2V97.2M390.4 78.8V83.6M397.6 84.0V86.0M400.0 86.6V88.6M402.4 89.0V91.0M408.0 89.0V91.0M416.8 96.6V98.6M417.6 97.8V99.8M418.4 96.4V99.0M420.8 92.9V98.4M423.2 82.1V87.8M424.8 84.6V86.6M428.8 79.0V81.0M430.4 75.2V77.9M432.0 74.2V78.5M432.8 77.8V81.0M433.6 79.4V81.4M438.4 74.5V77.6M440.8 78.2V80.4M441.6 80.0V82.0M445.6 80.2V82.2M446.4 80.2V82.2M449.6 83.4V85.4M457.6 88.4V90.4M458.4 89.0V91.0M462.4 92.8V95.2M465.6 96.5V98.5M466.4 96.5V98.5M470.4 103.4V105.4M471.2 103.6V106.3M472.8 100.9V104.7M473.6 100.7V102.7M474.4 100.2V102.2M479.2 110.9V112.9M480.0 110.2V112.2M480.0 112.5V114.5M485.6 116.9V119.5M486.4 117.5V119.5M490.4 116.2V118.9M493.6 116.9V118.9M498.4 115.0V117.0M499.2 116.0V119.0M504.0 112.5V114.5M504.8 112.5V114.5M515.2 116.2V118.2M521.6 120.0V122.0M522.4 121.7V123.9M524.0 118.1V120.1M524.8 118.1V120.1M528.8 105.8V109.5M532.0 107.4V110.1M536.0 103.1V105.8M539.2 106.9V108.9M543.1 109.4V111.4M544.7 113.1V115.1M545.5 108.1V112.4M548.7 102.5V106.0M550.3 101.9V103.9M551.1 101.5V103.5M552.7 101.0V103.0M557.5 93.5V96.1M564.7 99.4V102.0M566.3 101.9V103.9M567.9 92.5V96.2M571.1 97.5V99.5M572.7 93.8V96.9M573.5 93.8V95.8M574.3 95.0V97.0M575.1 95.0V97.0M576.7 98.8V100.8M583.9 89.4V91.4M588.7 81.9V83.9M591.1 83.3V85.3M592.7 83.8V85.8M594.3 86.2V88.2M597.5 84.4V86.4M598.3 85.9V87.9M603.2 92.9V96.6M608.8 92.8V95.4M611.2 99.6V101.6M612.8 92.1V96.8M615.2 95.4V97.4M616.0 94.6V96.6M622.4 94.9V97.9M623.2 92.6V98.4M652.0 139.1V149.1M653.6 147.2V156.2M668.0 127.1V136.1M668.8 128.8V135.0M684.8 115.7V122.5M690.4 125.4V133.4M693.6 128.8V141.9M716.8 105.6V110.6M717.6 105.6V110.6M727.8 115.8V120.8M733.4 107.0V112.6M747.8 118.3V122.6M749.4 115.1V120.8M755.0 138.1V142.0M755.8 137.2V140.9M769.1 161.5V167.8M771.5 164.0V169.6M777.1 159.6V162.1M777.9 159.6V162.1M784.3 157.8V160.2M785.9 155.9V158.4M791.5 147.9V152.1M794.7 148.9V154.0M802.7 157.1V160.2M803.5 157.1V160.2M805.1 156.5V159.6M806.7 160.2V162.1M809.1 157.1V159.0M814.7 161.5V165.2M816.3 164.0V167.8M825.1 165.9V169.0M826.7 165.9V167.8M827.5 164.3V166.6M828.3 163.4V165.9M833.9 160.8V163.3M836.3 163.4V167.1M838.7 170.9V174.0M845.1 172.8V174.6M845.9 172.8V174.9M853.9 176.1V179.6M859.5 165.9V168.3M866.2 172.8V174.8M869.4 168.4V170.4M871.8 161.5V166.1M874.2 160.0V162.0M876.6 159.5V161.5M877.4 159.0V161.0M881.4 152.1V154.1M883.0 149.6V151.6M885.4 151.5V153.5M899.0 152.8V154.8M900.6 155.4V158.5M902.2 156.1V158.1M904.6 157.1V159.1M907.0 159.0V161.0M907.8 159.0V161.0M908.6 159.0V161.0M911.8 160.2V162.2M914.2 159.0V161.0M915.0 158.7V160.7M917.4 156.5V158.5M920.6 154.0V156.0M927.0 155.9V157.9M928.6 156.5V158.5M930.2 156.5V158.5M931.8 155.9V157.9M939.8 153.3V156.0M944.6 154.6V156.6M946.2 152.1V154.1M951.0 149.0V151.0M952.6 152.1V154.1M953.4 150.8V152.8M954.2 149.0V151.5M955.0 149.0V151.0M957.4 147.1V149.1M963.0 149.0V151.0M964.6 148.4V150.4"/>
<path stroke="#a03890" d="M628.8 110.0V125.0M632.0 104.4V125.0M636.8 120.0V133.8M664.0 138.8V147.5M705.6 117.5V130.0"/>
<path stroke="#f0a040" d="M638.4 120.0V127.5M644.0 121.2V129.0M688.8 122.5V128.8M710.4 108.8V114.0M712.8 100.0V108.8"/>
</g>
<path d="M4.9 38.6 H970.6" fill="none" stroke="#e4e4e4" stroke-width="1"/>
<path d="M970.6 38.6 V187.0 H4.9" fill="none" stroke="#b4b4b4" stroke-width="1"/>
<g style="filter:grayscale(1)">
<text y="48.50" font-size="10.1" fill="#989898" stroke="#989898" stroke-width="0.22" font-family="'Liberation Sans','IPAGothic',sans-serif"><tspan x="6.30" font-size="9.7" font-family="'Liberation Mono','IPAGothic',monospace" textLength="19.36" lengthAdjust="spacingAndGlyphs">時刻</tspan><tspan x="26.93" textLength="2.30" lengthAdjust="spacingAndGlyphs">:</tspan><tspan x="30.62" textLength="4.60" lengthAdjust="spacingAndGlyphs">0</tspan><tspan x="35.46" textLength="4.60" lengthAdjust="spacingAndGlyphs">6</tspan><tspan x="41.45" textLength="2.30" lengthAdjust="spacingAndGlyphs">:</tspan><tspan x="45.14" textLength="4.60" lengthAdjust="spacingAndGlyphs">0</tspan><tspan x="49.98" textLength="4.60" lengthAdjust="spacingAndGlyphs">0</tspan><tspan x="55.97"> </tspan><tspan x="59.54" font-size="9.7" font-family="'Liberation Mono','IPAGothic',monospace" textLength="19.36" lengthAdjust="spacingAndGlyphs">始値</tspan><tspan x="80.17" textLength="2.30" lengthAdjust="spacingAndGlyphs">:</tspan><tspan x="83.86" textLength="4.60" lengthAdjust="spacingAndGlyphs">7</tspan><tspan x="89.85" textLength="2.30" lengthAdjust="spacingAndGlyphs">,</tspan><tspan x="93.54" textLength="4.60" lengthAdjust="spacingAndGlyphs">8</tspan><tspan x="98.38" textLength="4.60" lengthAdjust="spacingAndGlyphs">7</tspan><tspan x="103.22" textLength="4.60" lengthAdjust="spacingAndGlyphs">0</tspan><tspan x="109.21"> </tspan><tspan x="112.78" font-size="9.7" font-family="'Liberation Mono','IPAGothic',monospace" textLength="19.36" lengthAdjust="spacingAndGlyphs">高値</tspan><tspan x="133.41" textLength="2.30" lengthAdjust="spacingAndGlyphs">:</tspan><tspan x="137.10" textLength="4.60" lengthAdjust="spacingAndGlyphs">7</tspan><tspan x="143.09" textLength="2.30" lengthAdjust="spacingAndGlyphs">,</tspan><tspan x="146.78" textLength="4.60" lengthAdjust="spacingAndGlyphs">8</tspan><tspan x="151.62" textLength="4.60" lengthAdjust="spacingAndGlyphs">7</tspan><tspan x="156.46" textLength="4.60" lengthAdjust="spacingAndGlyphs">0</tspan><tspan x="162.45"> </tspan><tspan x="166.02" font-size="9.7" font-family="'Liberation Mono','IPAGothic',monospace" textLength="19.36" lengthAdjust="spacingAndGlyphs">安値</tspan><tspan x="186.65" textLength="2.30" lengthAdjust="spacingAndGlyphs">:</tspan><tspan x="190.34" textLength="4.60" lengthAdjust="spacingAndGlyphs">7</tspan><tspan x="196.33" textLength="2.30" lengthAdjust="spacingAndGlyphs">,</tspan><tspan x="200.02" textLength="4.60" lengthAdjust="spacingAndGlyphs">8</tspan><tspan x="204.86" textLength="4.60" lengthAdjust="spacingAndGlyphs">7</tspan><tspan x="209.70" textLength="4.60" lengthAdjust="spacingAndGlyphs">0</tspan><tspan x="215.69"> </tspan><tspan x="219.26" font-size="9.7" font-family="'Liberation Mono','IPAGothic',monospace" textLength="19.36" lengthAdjust="spacingAndGlyphs">終値</tspan><tspan x="239.89" textLength="2.30" lengthAdjust="spacingAndGlyphs">:</tspan><tspan x="243.58" textLength="4.60" lengthAdjust="spacingAndGlyphs">7</tspan><tspan x="249.57" textLength="2.30" lengthAdjust="spacingAndGlyphs">,</tspan><tspan x="253.26" textLength="4.60" lengthAdjust="spacingAndGlyphs">8</tspan><tspan x="258.10" textLength="4.60" lengthAdjust="spacingAndGlyphs">7</tspan><tspan x="262.94" textLength="4.60" lengthAdjust="spacingAndGlyphs">0</tspan></text>
<text y="194.90" font-size="10.1" fill="#a8a8a8" stroke="#a8a8a8" stroke-width="0.22" font-family="'Liberation Sans','IPAGothic',sans-serif"><tspan x="46.62" textLength="4.60" lengthAdjust="spacingAndGlyphs">0</tspan><tspan x="51.46" textLength="4.60" lengthAdjust="spacingAndGlyphs">9</tspan></text>
<text y="194.90" font-size="10.1" fill="#a8a8a8" stroke="#a8a8a8" stroke-width="0.22" font-family="'Liberation Sans','IPAGothic',sans-serif"><tspan x="95.52" textLength="4.60" lengthAdjust="spacingAndGlyphs">1</tspan><tspan x="100.36" textLength="4.60" lengthAdjust="spacingAndGlyphs">0</tspan></text>
<text y="194.90" font-size="10.1" fill="#a8a8a8" stroke="#a8a8a8" stroke-width="0.22" font-family="'Liberation Sans','IPAGothic',sans-serif"><tspan x="143.42" textLength="4.60" lengthAdjust="spacingAndGlyphs">1</tspan><tspan x="148.26" textLength="4.60" lengthAdjust="spacingAndGlyphs">1</tspan></text>
<text y="194.90" font-size="10.1" fill="#a8a8a8" stroke="#a8a8a8" stroke-width="0.22" font-family="'Liberation Sans','IPAGothic',sans-serif"><tspan x="191.22" textLength="4.60" lengthAdjust="spacingAndGlyphs">1</tspan><tspan x="196.06" textLength="4.60" lengthAdjust="spacingAndGlyphs">2</tspan></text>
<text y="194.90" font-size="10.1" fill="#a8a8a8" stroke="#a8a8a8" stroke-width="0.22" font-family="'Liberation Sans','IPAGothic',sans-serif"><tspan x="240.02" textLength="4.60" lengthAdjust="spacingAndGlyphs">1</tspan><tspan x="244.86" textLength="4.60" lengthAdjust="spacingAndGlyphs">3</tspan></text>
<text y="194.90" font-size="10.1" fill="#a8a8a8" stroke="#a8a8a8" stroke-width="0.22" font-family="'Liberation Sans','IPAGothic',sans-serif"><tspan x="286.42" textLength="4.60" lengthAdjust="spacingAndGlyphs">1</tspan><tspan x="291.26" textLength="4.60" lengthAdjust="spacingAndGlyphs">4</tspan></text>
<text y="194.90" font-size="10.1" fill="#a8a8a8" stroke="#a8a8a8" stroke-width="0.22" font-family="'Liberation Sans','IPAGothic',sans-serif"><tspan x="322.24" textLength="4.60" lengthAdjust="spacingAndGlyphs">1</tspan><tspan x="327.08" textLength="4.60" lengthAdjust="spacingAndGlyphs">5</tspan></text>
<text y="194.90" font-size="10.1" fill="#a8a8a8" stroke="#a8a8a8" stroke-width="0.22" font-family="'Liberation Sans','IPAGothic',sans-serif"><tspan x="343.52" textLength="4.60" lengthAdjust="spacingAndGlyphs">1</tspan><tspan x="348.36" textLength="4.60" lengthAdjust="spacingAndGlyphs">6</tspan></text>
<text y="194.90" font-size="10.1" fill="#a8a8a8" stroke="#a8a8a8" stroke-width="0.22" font-family="'Liberation Sans','IPAGothic',sans-serif"><tspan x="367.27" textLength="4.60" lengthAdjust="spacingAndGlyphs">1</tspan><tspan x="372.11" textLength="4.60" lengthAdjust="spacingAndGlyphs">7</tspan></text>
<text y="194.90" font-size="10.1" fill="#a8a8a8" stroke="#a8a8a8" stroke-width="0.22" font-family="'Liberation Sans','IPAGothic',sans-serif"><tspan x="415.02" textLength="4.60" lengthAdjust="spacingAndGlyphs">1</tspan><tspan x="419.86" textLength="4.60" lengthAdjust="spacingAndGlyphs">8</tspan></text>
<text y="194.90" font-size="10.1" fill="#a8a8a8" stroke="#a8a8a8" stroke-width="0.22" font-family="'Liberation Sans','IPAGothic',sans-serif"><tspan x="461.62" textLength="4.60" lengthAdjust="spacingAndGlyphs">1</tspan><tspan x="466.46" textLength="4.60" lengthAdjust="spacingAndGlyphs">9</tspan></text>
<text y="194.90" font-size="10.1" fill="#a8a8a8" stroke="#a8a8a8" stroke-width="0.22" font-family="'Liberation Sans','IPAGothic',sans-serif"><tspan x="510.32" textLength="4.60" lengthAdjust="spacingAndGlyphs">2</tspan><tspan x="515.16" textLength="4.60" lengthAdjust="spacingAndGlyphs">0</tspan></text>
<text y="194.90" font-size="10.1" fill="#a8a8a8" stroke="#a8a8a8" stroke-width="0.22" font-family="'Liberation Sans','IPAGothic',sans-serif"><tspan x="556.42" textLength="4.60" lengthAdjust="spacingAndGlyphs">2</tspan><tspan x="561.26" textLength="4.60" lengthAdjust="spacingAndGlyphs">1</tspan></text>
<text y="194.90" font-size="10.1" fill="#a8a8a8" stroke="#a8a8a8" stroke-width="0.22" font-family="'Liberation Sans','IPAGothic',sans-serif"><tspan x="601.92" textLength="4.60" lengthAdjust="spacingAndGlyphs">2</tspan><tspan x="606.76" textLength="4.60" lengthAdjust="spacingAndGlyphs">2</tspan></text>
<text y="194.90" font-size="10.1" fill="#a8a8a8" stroke="#a8a8a8" stroke-width="0.22" font-family="'Liberation Sans','IPAGothic',sans-serif"><tspan x="649.62" textLength="4.60" lengthAdjust="spacingAndGlyphs">2</tspan><tspan x="654.46" textLength="4.60" lengthAdjust="spacingAndGlyphs">3</tspan></text>
<text y="194.90" font-size="10.1" fill="#a8a8a8" stroke="#a8a8a8" stroke-width="0.22" font-family="'Liberation Sans','IPAGothic',sans-serif"><tspan x="697.62" textLength="4.60" lengthAdjust="spacingAndGlyphs">0</tspan><tspan x="702.46" textLength="4.60" lengthAdjust="spacingAndGlyphs">0</tspan></text>
<text y="194.90" font-size="10.1" fill="#a8a8a8" stroke="#a8a8a8" stroke-width="0.22" font-family="'Liberation Sans','IPAGothic',sans-serif"><tspan x="745.62" textLength="4.60" lengthAdjust="spacingAndGlyphs">0</tspan><tspan x="750.46" textLength="4.60" lengthAdjust="spacingAndGlyphs">1</tspan></text>
<text y="194.90" font-size="10.1" fill="#a8a8a8" stroke="#a8a8a8" stroke-width="0.22" font-family="'Liberation Sans','IPAGothic',sans-serif"><tspan x="794.22" textLength="4.60" lengthAdjust="spacingAndGlyphs">0</tspan><tspan x="799.06" textLength="4.60" lengthAdjust="spacingAndGlyphs">2</tspan></text>
<text y="194.90" font-size="10.1" fill="#a8a8a8" stroke="#a8a8a8" stroke-width="0.22" font-family="'Liberation Sans','IPAGothic',sans-serif"><tspan x="842.12" textLength="4.60" lengthAdjust="spacingAndGlyphs">0</tspan><tspan x="846.96" textLength="4.60" lengthAdjust="spacingAndGlyphs">3</tspan></text>
<text y="194.90" font-size="10.1" fill="#a8a8a8" stroke="#a8a8a8" stroke-width="0.22" font-family="'Liberation Sans','IPAGothic',sans-serif"><tspan x="890.02" textLength="4.60" lengthAdjust="spacingAndGlyphs">0</tspan><tspan x="894.86" textLength="4.60" lengthAdjust="spacingAndGlyphs">4</tspan></text>
<text y="194.90" font-size="10.1" fill="#a8a8a8" stroke="#a8a8a8" stroke-width="0.22" font-family="'Liberation Sans','IPAGothic',sans-serif"><tspan x="929.62" textLength="4.60" lengthAdjust="spacingAndGlyphs">0</tspan><tspan x="934.46" textLength="4.60" lengthAdjust="spacingAndGlyphs">5</tspan></text>
<text y="194.90" font-size="10.1" fill="#a8a8a8" stroke="#a8a8a8" stroke-width="0.22" font-family="'Liberation Sans','IPAGothic',sans-serif"><tspan x="954.84" textLength="4.60" lengthAdjust="spacingAndGlyphs">0</tspan><tspan x="959.68" textLength="4.60" lengthAdjust="spacingAndGlyphs">6</tspan></text>
<text y="194.90" font-size="10.1" fill="#d8d8d8" stroke="#d8d8d8" stroke-width="0.22" font-weight="bold" font-family="'Liberation Sans','IPAGothic',sans-serif"><tspan x="20.82" textLength="4.60" lengthAdjust="spacingAndGlyphs">0</tspan><tspan x="25.66" textLength="4.60" lengthAdjust="spacingAndGlyphs">6</tspan></text>
<text y="183.40" font-size="10.1" fill="#c0c0c0" stroke="#c0c0c0" stroke-width="0.22" font-family="'Liberation Sans','IPAGothic',sans-serif"><tspan x="697.72" textLength="4.60" lengthAdjust="spacingAndGlyphs">0</tspan><tspan x="702.56" textLength="4.60" lengthAdjust="spacingAndGlyphs">4</tspan></text>
</g>
<clipPath id="ca0"><rect x="970.6" y="38.6" width="46.70" height="161.10"/></clipPath>
<g clip-path="url(#ca0)" style="filter:grayscale(1)">
<text y="62.20" font-size="10.1" fill="#9a9a9a" stroke="#9a9a9a" stroke-width="0.22" font-family="'Liberation Sans','IPAGothic',sans-serif"><tspan x="971.52" textLength="4.60" lengthAdjust="spacingAndGlyphs">7</tspan><tspan x="977.51" textLength="2.30" lengthAdjust="spacingAndGlyphs">,</tspan><tspan x="981.20" textLength="4.60" lengthAdjust="spacingAndGlyphs">9</tspan><tspan x="986.04" textLength="4.60" lengthAdjust="spacingAndGlyphs">2</tspan><tspan x="990.88" textLength="4.60" lengthAdjust="spacingAndGlyphs">5</tspan></text>
<text y="100.05" font-size="10.1" fill="#9a9a9a" stroke="#9a9a9a" stroke-width="0.22" font-family="'Liberation Sans','IPAGothic',sans-serif"><tspan x="971.52" textLength="4.60" lengthAdjust="spacingAndGlyphs">7</tspan><tspan x="977.51" textLength="2.30" lengthAdjust="spacingAndGlyphs">,</tspan><tspan x="981.20" textLength="4.60" lengthAdjust="spacingAndGlyphs">9</tspan><tspan x="986.04" textLength="4.60" lengthAdjust="spacingAndGlyphs">0</tspan><tspan x="990.88" textLength="4.60" lengthAdjust="spacingAndGlyphs">0</tspan></text>
<text y="137.85" font-size="10.1" fill="#9a9a9a" stroke="#9a9a9a" stroke-width="0.22" font-family="'Liberation Sans','IPAGothic',sans-serif"><tspan x="971.52" textLength="4.60" lengthAdjust="spacingAndGlyphs">7</tspan><tspan x="977.51" textLength="2.30" lengthAdjust="spacingAndGlyphs">,</tspan><tspan x="981.20" textLength="4.60" lengthAdjust="spacingAndGlyphs">8</tspan><tspan x="986.04" textLength="4.60" lengthAdjust="spacingAndGlyphs">7</tspan><tspan x="990.88" textLength="4.60" lengthAdjust="spacingAndGlyphs">5</tspan></text>
<text y="175.60" font-size="10.1" fill="#9a9a9a" stroke="#9a9a9a" stroke-width="0.22" font-family="'Liberation Sans','IPAGothic',sans-serif"><tspan x="971.52" textLength="4.60" lengthAdjust="spacingAndGlyphs">7</tspan><tspan x="977.51" textLength="2.30" lengthAdjust="spacingAndGlyphs">,</tspan><tspan x="981.20" textLength="4.60" lengthAdjust="spacingAndGlyphs">8</tspan><tspan x="986.04" textLength="4.60" lengthAdjust="spacingAndGlyphs">5</tspan><tspan x="990.88" textLength="4.60" lengthAdjust="spacingAndGlyphs">0</tspan></text>
<rect x="970.4" y="138.8" width="46.90" height="16.80" fill="#d6d6d6"/>
<text y="149.60" font-size="10.1" fill="#1a1a1a" stroke="#1a1a1a" stroke-width="0.22" font-weight="bold" font-family="'Liberation Sans','IPAGothic',sans-serif"><tspan x="981.32" textLength="4.60" lengthAdjust="spacingAndGlyphs">7</tspan><tspan x="987.31" textLength="2.30" lengthAdjust="spacingAndGlyphs">,</tspan><tspan x="991.00" textLength="4.60" lengthAdjust="spacingAndGlyphs">8</tspan><tspan x="995.84" textLength="4.60" lengthAdjust="spacingAndGlyphs">7</tspan><tspan x="1000.68" textLength="4.60" lengthAdjust="spacingAndGlyphs">0</tspan></text>
</g>
<rect x="4.9" y="203.6" width="1012.40" height="157.40" fill="#1b1b1b"/>
<rect x="5.5" y="203.6" width="965.10" height="144.20" fill="#000"/>
<clipPath id="cp1"><rect x="5.5" y="203.6" width="965.10" height="144.20"/></clipPath>
<g clip-path="url(#cp1)">
<path d="M5.5 216.9H970.6M5.5 246.2H970.6M5.5 275.7H970.6M5.5 305.4H970.6M5.5 334.6H970.6M5.5 364.2H970.6M33.5 203.6V347.8M45.6 203.6V347.8M94.5 203.6V347.8M142.4 203.6V347.8M190.2 203.6V347.8M239.0 203.6V347.8M285.4 203.6V347.8M333.4 203.6V347.8M342.5 203.6V347.8M366.25 203.6V347.8M414.0 203.6V347.8M460.6 203.6V347.8M509.3 203.6V347.8M555.4 203.6V347.8M600.9 203.6V347.8M648.6 203.6V347.8M696.6 203.6V347.8M744.6 203.6V347.8M793.2 203.6V347.8M841.1 203.6V347.8M889.0 203.6V347.8M928.6 203.6V347.8M966.8 203.6V347.8" stroke="#404040" stroke-width="1.0" fill="none"/>
<path d="M5.5 216.9H970.6M5.5 246.2H970.6M5.5 275.7H970.6M5.5 305.4H970.6M5.5 334.6H970.6M5.5 364.2H970.6M33.5 203.6V347.8M45.6 203.6V347.8M94.5 203.6V347.8M142.4 203.6V347.8M190.2 203.6V347.8M239.0 203.6V347.8M285.4 203.6V347.8M333.4 203.6V347.8M342.5 203.6V347.8M366.25 203.6V347.8M414.0 203.6V347.8M460.6 203.6V347.8M509.3 203.6V347.8M555.4 203.6V347.8M600.9 203.6V347.8M648.6 203.6V347.8M696.6 203.6V347.8M744.6 203.6V347.8M793.2 203.6V347.8M841.1 203.6V347.8M889.0 203.6V347.8M928.6 203.6V347.8M966.8 203.6V347.8" stroke="#606060" stroke-width="0.9" stroke-dasharray="1.05 1.05" fill="none"/>
<path d="M33.5 203.6V347.8" stroke="#4a4a4a" stroke-width="1.4" fill="none"/>
</g>
<g clip-path="url(#cp1)" fill="none" stroke-width="1.0">
<path stroke="#f01010" d="M31.6 226.2V231.9M33.2 227.5V236.2M34.8 230.0V236.9M35.6 225.0V232.9M36.4 225.0V231.2M38.8 228.8V232.5M42.0 231.8V233.2M45.2 233.1V237.5M46.0 233.1V237.5M47.6 232.4V233.9M51.6 236.8V238.3M54.0 237.4V238.9M57.2 238.0V239.5M61.2 233.0V234.5M65.2 237.2V238.9M66.0 237.4V238.9M71.6 235.0V240.0M74.0 235.9V237.9M74.8 235.0V237.5M75.6 234.7V236.8M80.5 233.8h1.6M86.1 234.4h1.6M96.0 229.9V231.4M100.8 230.5V232.0M104.0 228.6V230.1M107.2 228.0V229.5M114.4 225.4V227.0M115.2 224.2V225.9M117.6 224.2V225.8M120.8 222.4V223.9M121.6 221.4V223.1M122.4 220.5V222.0M124.8 223.1V224.6M121.0 222.4V223.9M121.8 221.2V222.8M122.6 220.5V222.0M130.6 225.1V226.6M132.2 224.9V226.4M136.2 228.2V230.1M140.2 228.0V229.5M141.0 228.0V229.5M141.8 227.8V229.3M143.4 227.4V228.9M145.0 226.8V228.2M150.2 226.2h1.6M161.4 229.4h1.6M189.6 226.6h1.6M198.1 221.1V222.6M206.1 223.5V225.0M206.9 223.2V224.7M210.1 223.2V224.7M214.1 226.4V227.9M216.7 224.4h1.6M235.5 223.3V224.8M241.9 230.0h1.6M241.7 230.0h1.6M252.9 229.0h1.6M265.4 225.8V227.5M282.3 229.0h1.6M286.4 232.2h1.6M302.3 226.6h1.6M314.2 225.6h1.6M323.9 223.1h1.6M328.2 226.5h1.6M329.4 224.4h1.6M334.4 223.0V224.5M336.8 222.1V223.6M337.6 221.8V223.2M338.4 221.5V223.0M339.2 221.1V222.6M340.8 220.2V221.8M348.7 220.5V222.0M349.5 219.5V221.0M350.3 218.6V220.1M351.9 215.0V217.4M352.7 213.8V217.1M355.1 214.8V217.0M359.1 215.2V216.8M360.7 215.1V216.6M362.3 215.0V216.5M364.7 216.5V218.0M384.8 223.8h1.6M390.7 219.4h1.6M396.1 224.4h1.6M410.2 230.6h1.6M413.6 225.6h1.6M417.9 231.2h1.6M421.1 228.8h1.6M421.9 221.9h1.6M427.7 220.6h1.6M428.2 217.5h1.6M431.4 216.2h1.6M451.1 218.4h1.6M451.9 216.2V220.6M454.8 223.4h1.6M457.9 223.2h1.6M471.4 232.8h1.6M480.4 235.6h1.6M479.8 235.0h1.6M501.1 232.5h1.6M513.4 246.8V248.5M515.0 246.3V247.8M517.4 248.0V249.5M522.2 252.4V253.9M528.6 251.3V252.8M539.0 252.5h1.6M540.7 253.5h1.6M547.3 256.2h1.6M548.2 255.0h1.6M564.2 257.2h1.6M576.5 258.8h1.6M582.3 252.8h1.6M586.5 246.2h1.6M589.0 243.1h1.6M597.0 240.6h1.6M612.3 255.6h1.6M615.5 254.7h1.6M616.2 253.1V256.2M621.7 255.0h1.6M623.2 254.4h1.6M630.2 257.5V262.5M631.0 253.8V263.8M631.8 254.4V262.4M635.0 256.6V261.5M641.4 269.5V275.0M642.2 267.5V275.0M643.0 265.0V271.2M643.8 263.7V269.3M644.6 262.5V267.5M645.4 261.2V266.2M647.0 264.2V273.5M647.8 265.0V275.0M648.6 266.2V273.8M649.4 266.2V273.8M651.0 267.5V271.7M652.6 268.8V273.8M654.2 263.8V268.1M655.0 263.1V265.6M659.0 267.5h1.6M663.2 274.4h1.6M664.0 272.5V276.2M665.7 276.6h1.6M666.5 272.5V280.6M674.0 272.8h1.6M674.8 270.6V275.0M677.0 271.2h1.6M677.8 267.5V275.0M685.5 268.4h1.6M686.1 273.1h1.6M686.9 271.2V275.0M690.5 276.6h1.6M691.2 273.1V280.0M694.0 276.2h1.6M694.8 273.8V278.8M695.2 275.0h1.6M696.0 272.5V277.5M696.5 274.1h1.6M697.2 270.6V277.5M704.0 283.8h1.6M704.8 281.2V286.2M706.1 281.9h1.6M706.9 280.0V283.8M707.3 280.6h1.6M708.6 276.9h1.6M710.5 274.4h1.6M711.2 272.5V276.2M714.8 275.3h1.6M716.5 273.4h1.6M717.2 271.9V275.0M718.0 272.5h1.6M722.3 281.9h1.6M724.8 272.5h1.6M734.2 277.2h1.6M735.0 273.1V281.2M741.5 293.6V295.1M742.3 293.6V295.1M745.5 293.1V294.6M746.3 292.3V293.8M748.7 293.0V294.5M750.3 293.6V295.1M751.9 296.5V298.2M755.9 298.9V300.8M757.5 300.5V302.0M759.1 302.4V303.9M768.7 321.9V323.4M769.5 320.9V322.4M770.3 320.0V321.5M771.1 321.2V322.8M776.7 326.9V328.4M777.5 323.2V328.9M779.1 321.2V322.8M780.7 320.6V322.1M783.1 321.4V326.4M783.9 321.4V326.4M784.7 319.4V322.3M787.1 318.1V322.8M787.9 311.4V319.2M788.7 309.6V316.4M792.7 316.9V318.4M795.9 319.5V324.5M804.7 321.9V325.0M805.5 320.6V323.0M807.1 321.5V324.5M807.9 324.0V326.5M824.8 336.4h1.6M826.1 332.0h1.6M837.3 339.5h1.6M840.5 335.8h1.6M841.2 332.0V339.5M842.7 338.9h1.6M846.7 332.0h1.6M864.2 329.5h1.6M872.0 328.2h1.6M875.7 329.5h1.6M881.7 322.6h1.6M893.2 320.1h1.6M917.3 329.5h1.6M928.5 327.0h1.6M930.1 326.4h1.6M954.5 325.1h1.6M957.0 319.5h1.6M958.2 318.2h1.6M959.5 316.4h1.6M960.2 312.0V320.8"/>
<path stroke="#1878e8" d="M30.0 223.1V228.1M32.4 226.7V233.3M34.0 228.5V236.5M37.2 228.1V232.5M38.0 228.4V232.5M40.4 226.2V235.0M42.8 232.9V234.5M44.4 233.8V238.8M46.8 232.6V234.9M48.4 233.9V235.8M53.2 237.4V238.9M55.6 237.6V239.1M56.4 237.8V239.3M58.8 236.1V237.6M62.0 233.6V235.1M64.4 236.1V237.6M69.2 237.4V238.9M70.8 235.6V239.7M84.0 234.7h1.6M84.8 232.5V236.9M98.4 230.2V231.7M99.2 230.5V232.0M105.2 232.5h1.6M109.6 227.1V228.6M111.2 227.2V228.7M116.8 223.7V225.2M118.4 224.6V226.1M126.4 224.7V226.4M127.2 225.9V227.6M127.4 226.1V227.6M131.4 224.9V226.4M134.6 226.1V227.6M135.4 226.1V227.6M151.4 226.9h1.6M153.2 226.2h1.6M156.1 230.0h1.6M169.4 226.2h1.6M184.8 227.8h1.6M198.9 222.2V223.9M199.7 222.7V224.2M204.5 224.4V225.9M205.3 223.6V225.1M211.7 224.2V225.7M212.5 224.9V226.4M224.2 226.9h1.6M228.9 226.9h1.6M233.1 226.1V227.6M233.9 225.2V226.7M237.9 223.0V224.5M239.5 225.0V227.0M239.8 226.9h1.6M250.2 230.0h1.6M256.1 230.2h1.6M266.2 226.1V227.6M267.0 226.5V228.0M267.8 226.8V228.2M268.6 228.2V230.1M269.4 228.6V230.1M272.3 231.2h1.6M276.1 230.2h1.6M284.4 230.0h1.6M296.7 226.0h1.6M307.7 226.2h1.6M310.7 226.2h1.6M311.9 226.9h1.6M319.2 225.6h1.6M343.1 210.0V218.1M343.9 212.6V217.9M344.7 215.6V217.6M345.5 216.8V218.4M353.5 212.5V216.9M363.1 215.3V216.8M366.3 217.1V218.6M367.1 216.8V218.2M366.1 217.5h1.6M367.7 216.2h1.6M376.1 215.0h1.6M386.4 226.9h1.6M393.6 220.0h1.6M405.7 226.9h1.6M407.3 229.4h1.6M416.1 233.1h1.6M422.7 220.6h1.6M429.8 215.0h1.6M436.4 213.1h1.6M441.9 221.0h1.6M445.2 217.2h1.6M465.7 226.9h1.6M466.7 229.4h1.6M467.9 231.2h1.6M481.4 233.8h1.6M484.4 234.4h1.6M481.4 233.8h1.6M484.4 233.8h1.6M488.2 234.4h1.6M502.7 233.8h1.6M509.4 234.4V236.9M510.2 235.9V245.0M511.0 240.5V247.5M511.8 243.7V248.4M516.6 247.1V248.6M518.2 247.4V248.9M519.0 246.8V248.2M520.6 250.5V252.6M521.4 251.2V255.6M523.8 249.1V250.6M527.0 252.4V253.9M542.7 257.2h1.6M544.2 258.1h1.6M545.5 260.6h1.6M549.5 257.2h1.6M554.8 258.5h1.6M559.2 258.5h1.6M566.7 251.9h1.6M570.7 254.4h1.6M572.3 256.2h1.6M575.2 258.5h1.6M601.5 246.2h1.6M609.2 256.2h1.6M625.4 245.0V263.8M626.2 247.5V258.8M627.8 251.2V260.0M628.6 256.1V265.0M629.4 257.5V265.0M632.6 255.6V260.0M633.4 256.9V260.9M634.2 258.1V261.9M636.6 259.2V263.8M637.4 261.4V266.3M638.2 263.8V270.0M640.6 271.9V275.0M646.2 263.8V272.5M650.2 267.5V273.1M653.4 266.2V270.7M656.1 263.1h1.6M660.5 269.4h1.6M661.2 266.9V271.9M661.7 273.1h1.6M662.5 271.2V275.0M664.5 277.2h1.6M665.2 273.8V280.6M667.1 268.1h1.6M667.9 265.6V270.6M668.6 273.8h1.6M672.3 276.2h1.6M674.8 269.7h1.6M675.6 268.1V271.2M678.0 272.2h1.6M678.8 270.6V273.8M680.2 273.1h1.6M681.5 271.2h1.6M688.2 276.2h1.6M689.5 277.5h1.6M691.7 278.1h1.6M692.5 275.0V281.2M698.0 273.1h1.6M698.8 270.0V276.2M699.2 277.5h1.6M700.0 275.0V280.0M702.7 286.9h1.6M703.5 283.8V290.0M721.1 280.0h1.6M726.1 274.4h1.6M727.3 273.1h1.6M729.0 277.2h1.6M729.8 275.0V279.4M738.3 284.1V288.4M739.1 285.6V290.0M739.9 288.8V297.5M740.7 290.6V296.6M744.7 292.8V295.1M747.9 292.4V293.9M751.1 295.2V297.0M755.1 297.4V298.9M763.1 303.0V304.5M763.9 304.0V308.8M764.7 306.8V313.8M765.5 309.8V317.5M763.1 303.9V306.4M763.9 305.4V310.8M764.7 308.3V318.2M766.3 316.9V318.4M767.1 318.1V322.1M767.9 320.5V322.1M771.9 322.4V324.0M774.3 318.2V325.8M779.9 320.9V322.4M781.5 321.8V323.4M782.3 321.9V323.4M785.5 320.5V323.6M789.5 307.6V315.8M790.3 312.7V318.4M793.5 317.0V323.2M794.3 320.0V324.2M796.7 321.6V325.3M799.1 321.9V323.4M800.7 324.3V325.9M801.5 325.6V327.6M802.3 327.2V329.0M806.3 319.4V321.0M809.5 323.4V324.9M811.1 325.1V329.0M820.7 329.5h1.6M821.7 334.5h1.6M823.0 335.8h1.6M831.1 337.0h1.6M832.3 338.9h1.6M833.6 339.2h1.6M839.2 333.2h1.6M841.5 332.6h1.6M853.0 333.9h1.6M854.2 332.0h1.6M855.5 330.8h1.6M874.5 329.2h1.6M883.2 323.9h1.6M886.3 322.6h1.6M887.6 323.5h1.6M895.1 322.6h1.6M898.0 322.6h1.6M904.7 326.0h1.6M909.7 328.5h1.6M912.6 328.2h1.6M913.4 325.8V330.8M916.7 330.8h1.6M917.5 328.2V333.2M926.7 327.3h1.6M927.5 324.5V330.1M931.7 328.2h1.6M932.5 326.4V330.1M938.2 326.0h1.6M958.8 322.0h1.6M962.0 320.8h1.6M962.6 323.9h1.6"/>
<path stroke="#e6d468" d="M7.0 225.6h1.6M11.7 226.2h1.6M16.1 228.1h1.6M17.9 226.5h1.6M22.9 226.2h1.6M26.7 225.6h1.6M39.6 227.3V233.9M50.8 236.1V237.6M52.4 237.4V238.9M54.8 237.4V238.9M59.6 234.2V236.2M60.4 234.2V235.8M62.8 234.6V236.4M67.6 239.2V240.8M72.4 236.1V238.9M73.2 236.8V238.2M76.4 234.2V235.8M79.2 234.4h1.6M82.3 233.1h1.6M88.0 233.1h1.6M89.8 232.8h1.6M91.7 232.5h1.6M94.4 230.5V232.0M97.6 229.9V231.4M100.0 230.5V232.0M102.4 229.2V230.8M103.2 229.2V230.8M108.8 227.4V228.9M110.4 226.8V228.2M112.8 228.0V229.5M113.6 226.1V228.0M116.0 223.0V224.6M119.2 224.9V226.4M124.0 222.4V223.9M125.6 223.6V225.1M123.4 222.0V223.9M125.0 223.6V225.1M125.8 224.2V225.8M129.0 225.5V227.0M129.8 225.5V227.0M133.0 224.9V226.4M137.0 227.4V228.9M137.8 226.8V228.2M138.6 227.5V229.0M139.4 228.0V229.5M146.6 226.1V227.6M147.4 226.1V227.6M148.2 226.1V227.6M154.8 225.6h1.6M159.8 228.8h1.6M167.9 228.8h1.6M170.7 226.2h1.6M172.9 228.8h1.6M175.2 226.2h1.6M176.9 228.1h1.6M178.6 230.0h1.6M181.1 230.6h1.6M192.3 228.1h1.6M195.7 225.6h1.6M200.5 223.0V224.5M202.1 224.9V226.4M203.7 224.9V226.4M207.7 223.0V224.5M208.5 223.0V224.5M209.3 223.0V224.5M210.9 223.6V225.1M213.3 226.7V228.9M214.9 225.5V227.0M219.8 223.8h1.6M226.1 225.6h1.6M234.7 224.2V225.8M236.3 222.4V223.9M237.1 222.7V224.2M238.7 223.9V225.4M240.3 226.1V227.6M244.2 230.6h1.6M246.1 228.8h1.6M244.8 230.0h1.6M246.1 228.8h1.6M251.7 228.5h1.6M257.9 230.0h1.6M260.6 228.2V229.8M261.4 228.1V229.6M262.2 228.0V229.5M264.6 227.4V228.9M270.2 229.2V230.8M273.9 230.0h1.6M277.3 232.5h1.6M278.6 231.0h1.6M280.2 232.8h1.6M287.9 229.0h1.6M289.8 230.2h1.6M292.9 228.5h1.6M294.8 227.8h1.6M301.1 226.5h1.6M304.8 226.2h1.6M308.9 227.8h1.6M313.2 228.1h1.6M315.7 223.8h1.6M316.9 225.6h1.6M321.1 225.6h1.6M322.3 223.8h1.6M325.4 226.2h1.6M326.7 227.8h1.6M331.1 228.1h1.6M332.3 224.0h1.6M336.0 222.4V223.9M340.0 220.7V222.2M341.6 219.2V220.8M346.3 218.0V219.5M347.1 219.1V220.6M347.9 219.9V221.4M351.1 216.1V218.4M355.9 215.5V217.0M356.7 215.4V216.9M358.3 215.2V216.8M359.9 215.2V216.8M361.5 214.9V216.4M363.9 215.5V217.0M365.5 217.4V218.9M359.8 216.2h1.6M361.4 214.8h1.6M362.9 216.2h1.6M364.4 218.1h1.6M371.7 216.5h1.6M372.9 218.5h1.6M380.4 221.5h1.6M382.9 221.9h1.6M388.2 223.1h1.6M389.4 221.2h1.6M397.9 223.8h1.6M399.4 223.1h1.6M401.7 225.6h1.6M403.6 226.5h1.6M408.6 231.9h1.6M411.9 228.8h1.6M414.2 231.0h1.6M416.9 235.0h1.6M419.8 231.0h1.6M424.8 223.1h1.6M432.9 214.8h1.6M434.2 216.2h1.6M438.2 216.2h1.6M441.1 218.5h1.6M444.2 218.5h1.6M447.3 216.2h1.6M452.3 223.1h1.6M460.4 226.5h1.6M464.2 225.6h1.6M469.8 233.5h1.6M472.9 233.8h1.6M473.9 230.6h1.6M475.7 230.6h1.6M476.7 235.0h1.6M478.2 236.0h1.6M479.4 237.5h1.6M482.9 233.8h1.6M486.4 233.5h1.6M482.9 234.4h1.6M486.4 233.5h1.6M491.7 237.2h1.6M493.6 235.0h1.6M495.2 232.5h1.6M497.3 231.2h1.6M498.2 232.8h1.6M505.7 232.8h1.6M507.3 234.4h1.6M512.6 246.4V250.1M515.8 246.1V247.6M519.8 247.8V251.0M523.0 248.6V252.9M524.6 249.9V251.4M525.4 250.6V252.1M526.2 251.6V253.1M527.8 251.8V253.2M529.4 250.5V252.0M533.0 251.9h1.6M534.2 253.8h1.6M536.1 251.2h1.6M537.3 253.1h1.6M541.7 253.8h1.6M546.5 259.4h1.6M552.3 258.5h1.6M555.7 254.4h1.6M557.3 256.2h1.6M560.2 255.6h1.6M561.7 253.1h1.6M569.2 253.8h1.6M578.0 252.5h1.6M578.6 256.2h1.6M579.2 253.8h1.6M581.1 253.1h1.6M584.2 251.2h1.6M585.5 249.8h1.6M591.1 244.4h1.6M593.0 244.4h1.6M596.1 242.8h1.6M599.0 244.4h1.6M600.5 240.6h1.6M603.6 242.5h1.6M606.1 244.4h1.6M607.7 247.2h1.6M610.7 254.8h1.6M614.2 258.5h1.6M616.7 255.0h1.6M619.2 251.9h1.6M620.2 256.2h1.6M635.8 255.6V261.2M639.0 267.4V272.5M639.8 268.8V272.5M651.8 267.5V270.6M655.5 268.8h1.6M657.3 268.4h1.6M669.8 270.9h1.6M671.1 272.8h1.6M673.2 279.7h1.6M676.1 277.5h1.6M676.9 275.0V280.0M679.0 275.6h1.6M682.7 273.8h1.6M684.0 268.8h1.6M687.3 271.2h1.6M692.7 281.2h1.6M700.5 281.9h1.6M701.2 278.8V285.0M701.5 283.8h1.6M702.2 281.2V286.2M705.2 285.9h1.6M711.7 275.6h1.6M713.2 273.8h1.6M720.2 275.6h1.6M723.6 277.5h1.6M731.1 273.8h1.6M732.3 275.6h1.6M736.7 283.8h1.6M737.5 281.9V285.6M737.5 281.9V285.6M743.1 291.1V293.4M743.9 291.1V292.6M747.1 291.8V293.2M749.5 293.4V294.9M752.7 297.8V300.1M753.5 298.6V300.1M754.3 297.7V299.2M759.9 303.9V305.8M761.5 302.4V303.9M762.3 302.4V303.9M772.7 318.1V322.8M773.5 318.1V320.0M775.1 323.3V326.5M775.9 325.7V327.5M786.3 323.1V325.2M795.1 322.4V325.2M797.5 323.7V326.5M799.9 323.1V324.8M803.9 325.0V326.5M808.7 323.1V325.2M810.3 323.8V325.2M812.7 328.8V330.2M816.1 329.2h1.6M818.6 327.0h1.6M824.0 337.6h1.6M828.2 332.2h1.6M829.8 335.8h1.6M835.5 340.8h1.6M845.2 333.0h1.6M848.0 333.2h1.6M849.2 336.0h1.6M851.7 336.0h1.6M859.2 331.8h1.6M865.7 331.4h1.6M866.0 333.2h1.6M867.6 331.8h1.6M873.0 326.0h1.6M877.2 329.2h1.6M880.1 323.9h1.6M884.7 323.2h1.6M889.5 324.5h1.6M900.5 324.8h1.6M906.3 329.2h1.6M908.5 325.8h1.6M910.1 324.8h1.6M914.7 326.8h1.6M918.2 331.8h1.6M923.8 326.0h1.6M925.1 329.2h1.6M935.7 327.0h1.6M940.1 327.0h1.6M941.3 324.5h1.6M943.2 324.8h1.6M944.7 326.0h1.6M952.6 326.0h1.6M955.7 325.8h1.6M960.7 318.9h1.6M966.3 313.0h1.6"/>
</g>
<path d="M4.9 203.6 H1017.3" fill="none" stroke="#9c9c9c" stroke-width="1"/>
<path d="M970.6 203.6 V347.8 H4.9" fill="none" stroke="#b4b4b4" stroke-width="1"/>
<g style="filter:grayscale(1)">
<text y="213.50" font-size="10.1" fill="#989898" stroke="#989898" stroke-width="0.22" font-family="'Liberation Sans','IPAGothic',sans-serif"><tspan x="6.30" font-size="9.7" font-family="'Liberation Mono','IPAGothic',monospace" textLength="19.36" lengthAdjust="spacingAndGlyphs">時刻</tspan><tspan x="26.93" textLength="2.30" lengthAdjust="spacingAndGlyphs">:</tspan><tspan x="30.62" textLength="4.60" lengthAdjust="spacingAndGlyphs">0</tspan><tspan x="35.46" textLength="4.60" lengthAdjust="spacingAndGlyphs">6</tspan><tspan x="41.45" textLength="2.30" lengthAdjust="spacingAndGlyphs">:</tspan><tspan x="45.14" textLength="4.60" lengthAdjust="spacingAndGlyphs">0</tspan><tspan x="49.98" textLength="4.60" lengthAdjust="spacingAndGlyphs">0</tspan><tspan x="55.97"> </tspan><tspan x="59.54" font-size="9.7" font-family="'Liberation Mono','IPAGothic',monospace" textLength="19.36" lengthAdjust="spacingAndGlyphs">始値</tspan><tspan x="80.17" textLength="2.30" lengthAdjust="spacingAndGlyphs">:</tspan><tspan x="83.86" textLength="4.60" lengthAdjust="spacingAndGlyphs">4</tspan><tspan x="89.85" textLength="2.30" lengthAdjust="spacingAndGlyphs">,</tspan><tspan x="93.54" textLength="4.60" lengthAdjust="spacingAndGlyphs">1</tspan><tspan x="98.38" textLength="4.60" lengthAdjust="spacingAndGlyphs">4</tspan><tspan x="103.22" textLength="4.60" lengthAdjust="spacingAndGlyphs">4</tspan><tspan x="109.21"> </tspan><tspan x="112.78" font-size="9.7" font-family="'Liberation Mono','IPAGothic',monospace" textLength="19.36" lengthAdjust="spacingAndGlyphs">高値</tspan><tspan x="133.41" textLength="2.30" lengthAdjust="spacingAndGlyphs">:</tspan><tspan x="137.10" textLength="4.60" lengthAdjust="spacingAndGlyphs">4</tspan><tspan x="143.09" textLength="2.30" lengthAdjust="spacingAndGlyphs">,</tspan><tspan x="146.78" textLength="4.60" lengthAdjust="spacingAndGlyphs">1</tspan><tspan x="151.62" textLength="4.60" lengthAdjust="spacingAndGlyphs">4</tspan><tspan x="156.46" textLength="4.60" lengthAdjust="spacingAndGlyphs">4</tspan><tspan x="162.45"> </tspan><tspan x="166.02" font-size="9.7" font-family="'Liberation Mono','IPAGothic',monospace" textLength="19.36" lengthAdjust="spacingAndGlyphs">安値</tspan><tspan x="186.65" textLength="2.30" lengthAdjust="spacingAndGlyphs">:</tspan><tspan x="190.34" textLength="4.60" lengthAdjust="spacingAndGlyphs">4</tspan><tspan x="196.33" textLength="2.30" lengthAdjust="spacingAndGlyphs">,</tspan><tspan x="200.02" textLength="4.60" lengthAdjust="spacingAndGlyphs">1</tspan><tspan x="204.86" textLength="4.60" lengthAdjust="spacingAndGlyphs">4</tspan><tspan x="209.70" textLength="4.60" lengthAdjust="spacingAndGlyphs">4</tspan><tspan x="215.69"> </tspan><tspan x="219.26" font-size="9.7" font-family="'Liberation Mono','IPAGothic',monospace" textLength="19.36" lengthAdjust="spacingAndGlyphs">終値</tspan><tspan x="239.89" textLength="2.30" lengthAdjust="spacingAndGlyphs">:</tspan><tspan x="243.58" textLength="4.60" lengthAdjust="spacingAndGlyphs">4</tspan><tspan x="249.57" textLength="2.30" lengthAdjust="spacingAndGlyphs">,</tspan><tspan x="253.26" textLength="4.60" lengthAdjust="spacingAndGlyphs">1</tspan><tspan x="258.10" textLength="4.60" lengthAdjust="spacingAndGlyphs">4</tspan><tspan x="262.94" textLength="4.60" lengthAdjust="spacingAndGlyphs">4</tspan></text>
<text y="355.70" font-size="10.1" fill="#a8a8a8" stroke="#a8a8a8" stroke-width="0.22" font-family="'Liberation Sans','IPAGothic',sans-serif"><tspan x="46.62" textLength="4.60" lengthAdjust="spacingAndGlyphs">0</tspan><tspan x="51.46" textLength="4.60" lengthAdjust="spacingAndGlyphs">9</tspan></text>
<text y="355.70" font-size="10.1" fill="#a8a8a8" stroke="#a8a8a8" stroke-width="0.22" font-family="'Liberation Sans','IPAGothic',sans-serif"><tspan x="95.52" textLength="4.60" lengthAdjust="spacingAndGlyphs">1</tspan><tspan x="100.36" textLength="4.60" lengthAdjust="spacingAndGlyphs">0</tspan></text>
<text y="355.70" font-size="10.1" fill="#a8a8a8" stroke="#a8a8a8" stroke-width="0.22" font-family="'Liberation Sans','IPAGothic',sans-serif"><tspan x="143.42" textLength="4.60" lengthAdjust="spacingAndGlyphs">1</tspan><tspan x="148.26" textLength="4.60" lengthAdjust="spacingAndGlyphs">1</tspan></text>
<text y="355.70" font-size="10.1" fill="#a8a8a8" stroke="#a8a8a8" stroke-width="0.22" font-family="'Liberation Sans','IPAGothic',sans-serif"><tspan x="191.22" textLength="4.60" lengthAdjust="spacingAndGlyphs">1</tspan><tspan x="196.06" textLength="4.60" lengthAdjust="spacingAndGlyphs">2</tspan></text>
<text y="355.70" font-size="10.1" fill="#a8a8a8" stroke="#a8a8a8" stroke-width="0.22" font-family="'Liberation Sans','IPAGothic',sans-serif"><tspan x="240.02" textLength="4.60" lengthAdjust="spacingAndGlyphs">1</tspan><tspan x="244.86" textLength="4.60" lengthAdjust="spacingAndGlyphs">3</tspan></text>
<text y="355.70" font-size="10.1" fill="#a8a8a8" stroke="#a8a8a8" stroke-width="0.22" font-family="'Liberation Sans','IPAGothic',sans-serif"><tspan x="286.42" textLength="4.60" lengthAdjust="spacingAndGlyphs">1</tspan><tspan x="291.26" textLength="4.60" lengthAdjust="spacingAndGlyphs">4</tspan></text>
<text y="355.70" font-size="10.1" fill="#a8a8a8" stroke="#a8a8a8" stroke-width="0.22" font-family="'Liberation Sans','IPAGothic',sans-serif"><tspan x="322.24" textLength="4.60" lengthAdjust="spacingAndGlyphs">1</tspan><tspan x="327.08" textLength="4.60" lengthAdjust="spacingAndGlyphs">5</tspan></text>
<text y="355.70" font-size="10.1" fill="#a8a8a8" stroke="#a8a8a8" stroke-width="0.22" font-family="'Liberation Sans','IPAGothic',sans-serif"><tspan x="343.52" textLength="4.60" lengthAdjust="spacingAndGlyphs">1</tspan><tspan x="348.36" textLength="4.60" lengthAdjust="spacingAndGlyphs">6</tspan></text>
<text y="355.70" font-size="10.1" fill="#a8a8a8" stroke="#a8a8a8" stroke-width="0.22" font-family="'Liberation Sans','IPAGothic',sans-serif"><tspan x="367.27" textLength="4.60" lengthAdjust="spacingAndGlyphs">1</tspan><tspan x="372.11" textLength="4.60" lengthAdjust="spacingAndGlyphs">7</tspan></text>
<text y="355.70" font-size="10.1" fill="#a8a8a8" stroke="#a8a8a8" stroke-width="0.22" font-family="'Liberation Sans','IPAGothic',sans-serif"><tspan x="415.02" textLength="4.60" lengthAdjust="spacingAndGlyphs">1</tspan><tspan x="419.86" textLength="4.60" lengthAdjust="spacingAndGlyphs">8</tspan></text>
<text y="355.70" font-size="10.1" fill="#a8a8a8" stroke="#a8a8a8" stroke-width="0.22" font-family="'Liberation Sans','IPAGothic',sans-serif"><tspan x="461.62" textLength="4.60" lengthAdjust="spacingAndGlyphs">1</tspan><tspan x="466.46" textLength="4.60" lengthAdjust="spacingAndGlyphs">9</tspan></text>
<text y="355.70" font-size="10.1" fill="#a8a8a8" stroke="#a8a8a8" stroke-width="0.22" font-family="'Liberation Sans','IPAGothic',sans-serif"><tspan x="510.32" textLength="4.60" lengthAdjust="spacingAndGlyphs">2</tspan><tspan x="515.16" textLength="4.60" lengthAdjust="spacingAndGlyphs">0</tspan></text>
<text y="355.70" font-size="10.1" fill="#a8a8a8" stroke="#a8a8a8" stroke-width="0.22" font-family="'Liberation Sans','IPAGothic',sans-serif"><tspan x="556.42" textLength="4.60" lengthAdjust="spacingAndGlyphs">2</tspan><tspan x="561.26" textLength="4.60" lengthAdjust="spacingAndGlyphs">1</tspan></text>
<text y="355.70" font-size="10.1" fill="#a8a8a8" stroke="#a8a8a8" stroke-width="0.22" font-family="'Liberation Sans','IPAGothic',sans-serif"><tspan x="601.92" textLength="4.60" lengthAdjust="spacingAndGlyphs">2</tspan><tspan x="606.76" textLength="4.60" lengthAdjust="spacingAndGlyphs">2</tspan></text>
<text y="355.70" font-size="10.1" fill="#a8a8a8" stroke="#a8a8a8" stroke-width="0.22" font-family="'Liberation Sans','IPAGothic',sans-serif"><tspan x="649.62" textLength="4.60" lengthAdjust="spacingAndGlyphs">2</tspan><tspan x="654.46" textLength="4.60" lengthAdjust="spacingAndGlyphs">3</tspan></text>
<text y="355.70" font-size="10.1" fill="#a8a8a8" stroke="#a8a8a8" stroke-width="0.22" font-family="'Liberation Sans','IPAGothic',sans-serif"><tspan x="697.62" textLength="4.60" lengthAdjust="spacingAndGlyphs">0</tspan><tspan x="702.46" textLength="4.60" lengthAdjust="spacingAndGlyphs">0</tspan></text>
<text y="355.70" font-size="10.1" fill="#a8a8a8" stroke="#a8a8a8" stroke-width="0.22" font-family="'Liberation Sans','IPAGothic',sans-serif"><tspan x="745.62" textLength="4.60" lengthAdjust="spacingAndGlyphs">0</tspan><tspan x="750.46" textLength="4.60" lengthAdjust="spacingAndGlyphs">1</tspan></text>
<text y="355.70" font-size="10.1" fill="#a8a8a8" stroke="#a8a8a8" stroke-width="0.22" font-family="'Liberation Sans','IPAGothic',sans-serif"><tspan x="794.22" textLength="4.60" lengthAdjust="spacingAndGlyphs">0</tspan><tspan x="799.06" textLength="4.60" lengthAdjust="spacingAndGlyphs">2</tspan></text>
<text y="355.70" font-size="10.1" fill="#a8a8a8" stroke="#a8a8a8" stroke-width="0.22" font-family="'Liberation Sans','IPAGothic',sans-serif"><tspan x="842.12" textLength="4.60" lengthAdjust="spacingAndGlyphs">0</tspan><tspan x="846.96" textLength="4.60" lengthAdjust="spacingAndGlyphs">3</tspan></text>
<text y="355.70" font-size="10.1" fill="#a8a8a8" stroke="#a8a8a8" stroke-width="0.22" font-family="'Liberation Sans','IPAGothic',sans-serif"><tspan x="890.02" textLength="4.60" lengthAdjust="spacingAndGlyphs">0</tspan><tspan x="894.86" textLength="4.60" lengthAdjust="spacingAndGlyphs">4</tspan></text>
<text y="355.70" font-size="10.1" fill="#a8a8a8" stroke="#a8a8a8" stroke-width="0.22" font-family="'Liberation Sans','IPAGothic',sans-serif"><tspan x="929.62" textLength="4.60" lengthAdjust="spacingAndGlyphs">0</tspan><tspan x="934.46" textLength="4.60" lengthAdjust="spacingAndGlyphs">5</tspan></text>
<text y="355.70" font-size="10.1" fill="#a8a8a8" stroke="#a8a8a8" stroke-width="0.22" font-family="'Liberation Sans','IPAGothic',sans-serif"><tspan x="954.84" textLength="4.60" lengthAdjust="spacingAndGlyphs">0</tspan><tspan x="959.68" textLength="4.60" lengthAdjust="spacingAndGlyphs">6</tspan></text>
<text y="355.70" font-size="10.1" fill="#d8d8d8" stroke="#d8d8d8" stroke-width="0.22" font-weight="bold" font-family="'Liberation Sans','IPAGothic',sans-serif"><tspan x="20.82" textLength="4.60" lengthAdjust="spacingAndGlyphs">0</tspan><tspan x="25.66" textLength="4.60" lengthAdjust="spacingAndGlyphs">6</tspan></text>
<text y="344.20" font-size="10.1" fill="#c0c0c0" stroke="#c0c0c0" stroke-width="0.22" font-family="'Liberation Sans','IPAGothic',sans-serif"><tspan x="697.72" textLength="4.60" lengthAdjust="spacingAndGlyphs">0</tspan><tspan x="702.56" textLength="4.60" lengthAdjust="spacingAndGlyphs">4</tspan></text>
</g>
<clipPath id="ca1"><rect x="970.6" y="203.6" width="46.70" height="157.40"/></clipPath>
<g clip-path="url(#ca1)" style="filter:grayscale(1)">
<text y="215.60" font-size="10.1" fill="#9a9a9a" stroke="#9a9a9a" stroke-width="0.22" font-family="'Liberation Sans','IPAGothic',sans-serif"><tspan x="971.52" textLength="4.60" lengthAdjust="spacingAndGlyphs">4</tspan><tspan x="977.51" textLength="2.30" lengthAdjust="spacingAndGlyphs">,</tspan><tspan x="981.20" textLength="4.60" lengthAdjust="spacingAndGlyphs">2</tspan><tspan x="986.04" textLength="4.60" lengthAdjust="spacingAndGlyphs">2</tspan><tspan x="990.88" textLength="4.60" lengthAdjust="spacingAndGlyphs">5</tspan></text>
<text y="244.90" font-size="10.1" fill="#9a9a9a" stroke="#9a9a9a" stroke-width="0.22" font-family="'Liberation Sans','IPAGothic',sans-serif"><tspan x="971.52" textLength="4.60" lengthAdjust="spacingAndGlyphs">4</tspan><tspan x="977.51" textLength="2.30" lengthAdjust="spacingAndGlyphs">,</tspan><tspan x="981.20" textLength="4.60" lengthAdjust="spacingAndGlyphs">2</tspan><tspan x="986.04" textLength="4.60" lengthAdjust="spacingAndGlyphs">0</tspan><tspan x="990.88" textLength="4.60" lengthAdjust="spacingAndGlyphs">0</tspan></text>
<text y="274.40" font-size="10.1" fill="#9a9a9a" stroke="#9a9a9a" stroke-width="0.22" font-family="'Liberation Sans','IPAGothic',sans-serif"><tspan x="971.52" textLength="4.60" lengthAdjust="spacingAndGlyphs">4</tspan><tspan x="977.51" textLength="2.30" lengthAdjust="spacingAndGlyphs">,</tspan><tspan x="981.20" textLength="4.60" lengthAdjust="spacingAndGlyphs">1</tspan><tspan x="986.04" textLength="4.60" lengthAdjust="spacingAndGlyphs">7</tspan><tspan x="990.88" textLength="4.60" lengthAdjust="spacingAndGlyphs">5</tspan></text>
<text y="304.10" font-size="10.1" fill="#9a9a9a" stroke="#9a9a9a" stroke-width="0.22" font-family="'Liberation Sans','IPAGothic',sans-serif"><tspan x="971.52" textLength="4.60" lengthAdjust="spacingAndGlyphs">4</tspan><tspan x="977.51" textLength="2.30" lengthAdjust="spacingAndGlyphs">,</tspan><tspan x="981.20" textLength="4.60" lengthAdjust="spacingAndGlyphs">1</tspan><tspan x="986.04" textLength="4.60" lengthAdjust="spacingAndGlyphs">5</tspan><tspan x="990.88" textLength="4.60" lengthAdjust="spacingAndGlyphs">0</tspan></text>
<text y="333.30" font-size="10.1" fill="#9a9a9a" stroke="#9a9a9a" stroke-width="0.22" font-family="'Liberation Sans','IPAGothic',sans-serif"><tspan x="971.52" textLength="4.60" lengthAdjust="spacingAndGlyphs">4</tspan><tspan x="977.51" textLength="2.30" lengthAdjust="spacingAndGlyphs">,</tspan><tspan x="981.20" textLength="4.60" lengthAdjust="spacingAndGlyphs">1</tspan><tspan x="986.04" textLength="4.60" lengthAdjust="spacingAndGlyphs">2</tspan><tspan x="990.88" textLength="4.60" lengthAdjust="spacingAndGlyphs">5</tspan></text>
<text y="362.90" font-size="10.1" fill="#9a9a9a" stroke="#9a9a9a" stroke-width="0.22" font-family="'Liberation Sans','IPAGothic',sans-serif"><tspan x="971.52" textLength="4.60" lengthAdjust="spacingAndGlyphs">4</tspan><tspan x="977.51" textLength="2.30" lengthAdjust="spacingAndGlyphs">,</tspan><tspan x="981.20" textLength="4.60" lengthAdjust="spacingAndGlyphs">1</tspan><tspan x="986.04" textLength="4.60" lengthAdjust="spacingAndGlyphs">0</tspan><tspan x="990.88" textLength="4.60" lengthAdjust="spacingAndGlyphs">0</tspan></text>
<rect x="970.4" y="304.5" width="46.90" height="17.20" fill="#d6d6d6"/>
<text y="315.50" font-size="10.1" fill="#1a1a1a" stroke="#1a1a1a" stroke-width="0.22" font-weight="bold" font-family="'Liberation Sans','IPAGothic',sans-serif"><tspan x="981.32" textLength="4.60" lengthAdjust="spacingAndGlyphs">4</tspan><tspan x="987.31" textLength="2.30" lengthAdjust="spacingAndGlyphs">,</tspan><tspan x="991.00" textLength="4.60" lengthAdjust="spacingAndGlyphs">1</tspan><tspan x="995.84" textLength="4.60" lengthAdjust="spacingAndGlyphs">4</tspan><tspan x="1000.68" textLength="4.60" lengthAdjust="spacingAndGlyphs">4</tspan></text>
</g>
<rect x="4.9" y="364.6" width="1012.40" height="175.60" fill="#1b1b1b"/>
<rect x="5.5" y="364.6" width="965.10" height="163.60" fill="#000"/>
<clipPath id="cp2"><rect x="5.5" y="364.6" width="965.10" height="163.60"/></clipPath>
<g clip-path="url(#cp2)">
<path d="M5.5 372.5H970.6M5.5 395.4H970.6M5.5 418.6H970.6M5.5 441.5H970.6M5.5 464.45H970.6M5.5 487.7H970.6M5.5 510.6H970.6M5.5 533.7H970.6M33.5 364.6V528.2M45.6 364.6V528.2M94.5 364.6V528.2M142.4 364.6V528.2M190.2 364.6V528.2M239.0 364.6V528.2M285.4 364.6V528.2M333.4 364.6V528.2M342.5 364.6V528.2M366.25 364.6V528.2M414.0 364.6V528.2M460.6 364.6V528.2M509.3 364.6V528.2M555.4 364.6V528.2M600.9 364.6V528.2M648.6 364.6V528.2M696.6 364.6V528.2M744.6 364.6V528.2M793.2 364.6V528.2M841.1 364.6V528.2M889.0 364.6V528.2M928.6 364.6V528.2M966.8 364.6V528.2" stroke="#404040" stroke-width="1.0" fill="none"/>
<path d="M5.5 372.5H970.6M5.5 395.4H970.6M5.5 418.6H970.6M5.5 441.5H970.6M5.5 464.45H970.6M5.5 487.7H970.6M5.5 510.6H970.6M5.5 533.7H970.6M33.5 364.6V528.2M45.6 364.6V528.2M94.5 364.6V528.2M142.4 364.6V528.2M190.2 364.6V528.2M239.0 364.6V528.2M285.4 364.6V528.2M333.4 364.6V528.2M342.5 364.6V528.2M366.25 364.6V528.2M414.0 364.6V528.2M460.6 364.6V528.2M509.3 364.6V528.2M555.4 364.6V528.2M600.9 364.6V528.2M648.6 364.6V528.2M696.6 364.6V528.2M744.6 364.6V528.2M793.2 364.6V528.2M841.1 364.6V528.2M889.0 364.6V528.2M928.6 364.6V528.2M966.8 364.6V528.2" stroke="#606060" stroke-width="0.9" stroke-dasharray="1.05 1.05" fill="none"/>
</g>
<g clip-path="url(#cp2)" fill="none" stroke="#ff0000"><polyline stroke-width="1.9" stroke-linejoin="miter" stroke-miterlimit="2" points="6.50,449.38 8.50,456.88 10.62,450.62 12.50,454.38 15.00,453.75 16.88,456.88 19.00,448.12 21.25,459.38 23.12,452.50 25.38,446.00 27.50,450.00 30.00,456.88 31.88,451.25 33.50,446.25 34.00,422.50 34.50,411.25 35.00,431.25 35.62,436.25 36.88,443.75 37.50,437.50 40.00,437.50 41.00,426.25 43.12,421.88 45.00,418.75 46.88,425.00 47.50,426.88 48.75,423.75 50.00,436.25 51.25,433.12 53.12,436.25 56.25,434.38 57.25,430.00 58.75,431.25 59.75,427.50 60.62,437.50 62.12,438.12 63.75,445.00 65.62,443.75 66.88,450.00 68.12,441.25 69.38,432.50 71.00,428.12 72.50,435.00 75.00,438.75 76.25,440.00 78.12,439.38 78.75,445.62 80.00,437.50 82.50,440.00 84.00,445.62 85.00,437.50 86.88,445.00 89.38,447.50 91.25,443.75 93.12,441.25 95.62,443.75 96.88,440.00 100.00,436.25 101.88,432.50 103.75,436.25 105.38,438.75 106.88,428.12 107.50,432.50 110.00,430.00 112.50,428.12 113.50,422.50 115.62,426.25 116.88,431.25 118.50,428.12 120.00,433.75 121.88,433.12 124.12,438.75 126.25,433.12 127.88,433.12 128.00,433.75 129.25,435.00 130.75,440.62 132.38,433.75 133.62,430.62 134.88,433.75 136.75,428.12 138.00,433.12 139.88,426.25 141.12,429.38 142.75,431.25 144.25,428.75 146.50,426.25 148.00,432.50 149.88,433.12 151.75,440.00 152.75,438.12 154.25,443.12 156.12,443.12 158.00,445.62 159.88,443.75 160.00,446.25 161.25,449.38 163.12,451.88 165.25,444.38 166.88,449.38 168.75,446.25 170.62,445.62 171.88,441.88 173.12,450.62 174.38,451.88 175.62,447.50 177.50,453.75 179.38,454.38 180.62,453.12 181.88,456.25 183.12,458.75 185.00,460.00 186.25,463.12 188.12,458.75 189.38,457.50 190.62,460.00 191.88,465.62 193.12,470.62 195.00,470.62 196.50,465.00 197.50,474.38 199.38,475.62 201.25,475.00 203.12,473.75 204.38,477.50 206.25,476.88 208.12,480.00 209.38,476.88 211.25,478.12 213.12,477.50 215.00,476.25 216.88,477.50 218.75,476.88 220.62,477.50 222.50,477.50 224.38,477.50 226.25,473.75 227.50,475.62 228.75,480.00 230.00,472.50 231.25,469.38 233.12,466.88 235.00,465.00 236.88,465.62 238.12,468.12 239.75,466.88 241.25,471.25 242.50,473.12 244.38,469.38 246.25,471.88 248.12,475.62 249.38,477.50 251.25,470.62 252.50,474.38 255.00,475.62 256.88,471.88 258.12,476.25 259.38,480.00 260.62,477.50 262.50,471.88 264.38,476.25 266.25,477.50 267.50,477.50 268.12,470.62 270.00,467.50 271.88,470.62 273.75,465.62 275.00,468.75 276.25,462.50 278.12,461.88 279.75,466.25 280.00,464.75 281.25,459.75 282.50,458.50 284.38,468.50 285.62,461.00 286.88,457.25 288.75,456.62 290.62,459.12 292.50,456.62 294.38,456.62 295.62,461.00 298.12,462.88 299.38,468.50 301.25,469.75 303.12,474.75 305.00,475.38 306.88,474.75 308.50,474.75 309.38,469.75 311.25,469.75 313.12,474.75 315.00,475.38 316.88,477.25 318.75,476.62 320.62,478.50 322.50,479.75 324.38,475.38 326.25,474.12 328.12,477.25 330.00,477.88 331.25,476.00 332.25,472.25 333.75,474.75 335.62,474.12 336.88,476.00 338.75,479.12 340.00,485.38 341.25,487.25 342.50,479.75 343.12,491.00 344.38,494.75 345.62,493.50 346.88,502.25 347.50,511.00 348.50,517.25 349.38,519.12 350.62,513.50 351.88,504.75 353.75,506.00 355.00,507.25 356.88,499.75 358.12,496.62 359.38,499.12 360.62,503.50 361.88,505.38 363.12,514.75 364.38,508.50 365.00,503.50 366.25,497.25 367.50,496.62 369.38,499.75 371.25,500.38 373.12,503.50 375.00,503.50 376.25,502.88 377.50,509.75 379.38,510.38 380.62,507.88 381.88,501.00 383.50,496.62 385.00,498.50 386.25,500.38 387.50,489.12 388.50,479.75 389.38,486.00 390.62,484.12 392.50,476.62 393.75,488.50 395.00,476.62 396.88,484.75 398.75,486.00 400.00,486.88 401.88,488.75 403.75,483.75 405.62,483.75 407.50,480.62 408.75,475.00 410.62,473.12 411.88,478.75 413.75,480.00 415.00,493.75 416.25,483.12 417.50,478.75 418.75,483.75 420.62,486.25 422.50,484.38 423.75,486.88 425.00,489.38 426.88,483.75 427.75,478.75 429.38,486.25 431.25,483.12 432.50,488.75 433.75,493.75 435.62,491.88 437.50,486.88 438.75,485.00 440.62,486.88 442.50,488.75 443.75,481.25 445.00,486.25 446.88,488.12 448.12,493.75 450.00,498.12 451.25,505.00 452.50,505.00 453.75,495.00 455.00,491.25 456.50,489.38 458.12,493.75 460.00,491.88 461.00,496.25 462.25,489.38 463.75,495.00 465.62,496.25 467.50,500.62 468.75,495.00 470.00,497.50 471.88,493.75 473.75,491.88 475.62,495.00 476.88,500.00 478.12,503.12 479.38,499.38 480.62,505.62 481.88,508.12 483.75,510.00 485.62,512.50 487.50,512.50 488.75,511.25 490.00,515.00 491.88,511.25 493.50,508.12 495.00,511.25 496.25,515.00 497.50,511.25 498.75,518.12 500.00,520.00 501.88,518.75 503.12,512.50 504.38,506.88 506.25,504.38 507.25,500.00 508.50,503.12 509.75,492.50 510.62,480.62 512.00,478.12 513.25,478.75 514.50,484.38 516.38,487.50 517.62,488.12 519.50,482.50 521.38,476.25 522.62,480.00 523.88,486.88 525.12,481.25 526.00,472.50 527.00,461.25 527.62,457.50 529.50,461.88 530.75,465.62 532.62,466.25 534.25,463.12 535.50,455.00 537.00,457.50 538.50,460.62 540.12,461.25 541.38,463.75 542.62,460.00 544.50,453.75 546.38,447.50 548.25,449.38 550.12,445.62 552.00,442.50 553.88,441.25 555.12,440.62 556.38,435.00 557.62,437.50 559.25,431.88 560.50,428.12 561.75,433.75 563.00,441.88 564.50,447.50 566.38,445.00 567.62,441.25 569.25,442.50 570.50,445.62 572.00,444.38 573.50,436.25 575.12,435.00 577.00,438.12 578.88,435.00 580.12,432.50 581.38,438.75 583.25,433.12 585.12,435.62 586.75,431.88 588.00,437.50 589.50,441.25 590.75,443.12 592.62,441.88 593.88,446.25 595.75,447.50 597.62,450.00 598.88,456.25 600.75,453.75 602.62,451.25 603.88,456.25 605.12,461.25 607.00,458.75 608.00,451.25 609.25,453.12 610.12,445.00 612.00,440.62 613.88,437.50 615.75,435.62 617.00,440.62 618.25,430.62 619.75,430.00 621.38,435.00 623.25,438.12 624.50,432.50 625.75,425.00 626.75,435.00 627.25,446.25 628.88,456.25 630.12,451.25 630.75,461.25 631.75,475.00 632.00,464.75 633.00,473.50 634.50,480.38 636.00,484.12 637.62,477.25 638.50,461.00 639.25,450.38 640.75,449.75 642.00,453.50 643.00,459.12 644.25,456.00 645.50,463.50 646.75,466.62 648.25,468.50 650.12,469.12 651.38,478.50 652.62,483.50 653.50,491.00 654.50,501.00 655.12,503.50 656.00,492.25 657.00,497.25 658.25,486.00 658.88,474.75 660.12,469.75 661.38,464.12 662.00,455.38 663.00,468.50 664.25,472.25 665.12,480.38 666.38,462.25 667.62,468.50 668.88,459.12 670.12,451.00 671.38,461.00 672.62,454.75 673.88,457.88 675.12,444.75 675.75,436.00 676.50,431.62 677.75,435.38 679.00,441.00 680.00,427.25 681.25,424.75 682.50,431.00 684.00,437.25 685.25,443.50 685.75,438.50 686.38,449.75 687.62,452.25 688.25,459.12 689.25,451.00 690.12,444.75 691.38,454.75 692.62,461.62 693.88,454.75 695.12,447.25 696.00,442.25 697.62,439.12 698.25,436.00 698.75,419.75 699.62,428.50 700.88,416.00 701.75,411.62 702.75,423.50 704.00,416.00 705.25,424.75 706.50,413.50 707.50,429.12 709.00,419.75 710.25,424.75 711.50,422.25 713.00,413.50 714.25,411.62 715.25,421.62 716.25,414.75 717.50,423.50 719.00,424.75 720.50,419.75 721.50,424.12 722.75,418.50 723.75,416.00 725.00,431.00 725.88,419.75 726.50,433.50 727.12,438.50 728.38,434.75 729.62,433.50 730.50,418.50 731.50,414.12 732.50,422.25 733.38,427.25 734.25,423.50 735.25,429.75 736.50,438.50 737.75,433.50 738.38,422.25 739.62,416.00 740.88,411.00 742.12,402.25 743.00,394.75 743.75,386.00 744.62,394.75 745.88,392.25 747.12,394.75 748.38,402.25 749.62,398.50 750.50,407.25 751.75,398.50 752.50,409.75 753.75,416.00 755.25,422.25 756.50,417.25 757.50,407.25 758.38,416.00 759.62,423.50 760.88,433.50 762.12,429.75 764.00,431.00 765.50,429.75 766.50,418.50 767.75,409.75 769.00,417.25 770.25,413.50 771.50,414.75 773.00,413.50 774.25,411.00 775.25,402.25 776.50,392.88 777.50,396.00 778.75,404.75 779.62,396.62 780.88,408.50 782.12,406.00 783.38,402.88 784.00,410.25 785.25,405.25 786.50,400.25 787.75,409.00 789.00,401.50 790.25,411.50 791.25,412.75 792.12,396.50 793.00,390.25 794.25,386.50 795.50,392.75 796.50,398.38 797.75,399.00 799.00,392.12 800.50,390.88 801.75,389.00 802.75,386.50 803.75,394.62 805.00,396.50 806.25,404.00 807.12,409.00 808.38,401.50 809.62,406.50 810.88,400.25 811.75,393.38 812.75,399.00 813.75,404.00 815.25,397.12 816.75,398.38 818.38,396.50 819.62,405.25 820.88,409.00 822.12,400.25 823.38,390.25 824.62,387.75 826.25,390.25 827.50,397.12 829.00,392.75 830.50,386.50 832.12,383.38 833.38,376.50 834.62,372.75 835.88,376.50 837.12,384.00 838.38,390.25 840.00,396.50 841.25,397.12 842.12,404.00 843.00,389.00 844.25,397.75 845.25,395.25 846.50,402.75 847.75,407.75 849.00,412.75 850.25,411.50 851.25,400.25 852.25,393.38 853.38,404.00 854.62,409.00 855.88,400.25 857.75,401.50 859.00,404.00 860.50,397.75 862.12,397.12 863.38,400.25 864.62,405.25 865.88,415.25 866.75,407.75 868.38,406.50 870.25,400.25 872.12,394.00 873.38,399.00 875.25,396.50 877.12,394.62 878.38,392.12 879.62,386.50 880.88,394.62 882.75,390.88 884.00,386.50 885.00,381.50 885.88,391.50 887.50,389.62 889.00,392.75 890.50,394.62 891.75,389.00 893.00,384.62 894.00,384.00 895.00,395.25 896.50,390.88 897.25,395.25 899.12,394.62 901.00,399.62 902.88,397.12 905.38,397.12 907.25,393.38 908.50,392.75 909.75,397.75 911.00,402.75 912.25,406.50 913.50,401.50 914.50,394.00 916.00,390.88 917.25,394.00 917.88,382.75 919.12,380.25 920.38,377.12 922.25,376.50 923.75,374.62 925.00,380.25 925.75,389.62 927.25,385.25 928.25,381.50 929.50,389.00 931.00,391.50 932.50,392.12 933.50,386.50 935.00,382.75 936.62,380.88 938.25,382.12 939.75,387.12 941.25,384.62 942.88,392.12 944.12,389.62 946.00,390.25 947.50,394.62 948.50,389.00 949.75,385.88 951.62,384.00 952.88,387.12 954.75,387.12 956.00,384.00 957.25,384.62 958.12,395.25 959.12,387.75 960.00,385.88 961.00,397.12 962.25,397.12 963.25,389.00 964.50,385.25 965.75,382.75 967.00,381.50 967.88,395.25 968.25,404.00"/><path stroke-width="0.9" d="M6.8 450.3v1.7M8.0 454.0v1.4M8.5 456.5v1.2M9.5 453.6v1.2M10.4 451.1v1.6M11.5 452.2v1.9M11.7 451.9v1.2M12.7 454.0v1.7M13.8 453.8v1.2M14.7 452.6v1.5M15.4 453.4v1.4M16.2 454.4v1.6M17.4 454.5v2.0M17.9 452.4v1.2M18.3 449.5v1.7M19.7 450.3v1.4M20.2 452.8v1.5M20.9 456.0v1.7M21.9 456.9v1.8M22.5 454.3v1.1M23.2 451.2v1.2M24.0 449.0v1.3M24.7 446.8v1.5M26.0 446.8v1.4M26.3 447.5v2.0M26.9 448.6v1.3M28.0 451.1v1.1M28.6 451.8v1.6M29.6 455.5v1.7M30.8 452.8v1.8M31.3 451.8v1.5M31.9 450.8v1.3M33.0 447.6v1.1M33.6 442.7v1.4M34.3 415.3v1.3M34.7 417.6v1.2M35.3 433.3v1.2M35.8 437.2v1.8M36.3 439.8v1.6M37.2 439.5v1.1M38.2 437.2v1.3M38.5 436.0v1.8M39.4 436.5v1.3M40.9 426.4v1.8M41.2 425.6v1.4M41.7 423.7v1.4M43.1 420.7v1.5M44.0 420.1v1.3M44.2 419.0v1.3M45.8 420.1v1.5M46.0 420.7v1.7M47.3 425.2v1.5M47.7 426.1v2.0M48.4 424.4v1.8M48.8 423.6v1.2M49.5 429.4v1.8M50.2 435.4v1.2M51.2 431.8v1.7M51.7 433.5v1.8M52.4 434.0v1.4M53.3 435.0v1.5M54.2 434.4v1.5M55.0 433.5v1.9M55.9 434.3v1.5M56.3 434.1v1.3M57.8 429.2v1.6M58.4 429.5v1.8M59.0 429.3v1.3M60.2 432.8v1.9M61.1 436.4v1.6M61.7 436.7v1.6M62.7 440.2v1.9M63.4 443.2v1.9M63.9 444.6v1.2M64.8 442.9v1.7M65.7 443.9v1.7M66.8 448.0v2.0M67.1 447.0v1.5M67.6 444.6v1.6M68.2 440.1v1.7M69.1 434.2v1.1M69.9 429.9v1.6M70.8 428.3v1.2M71.0 428.0v1.3M72.1 432.7v1.8M72.6 433.6v1.9M73.4 436.1v1.7M74.2 435.9v1.9M75.1 437.2v1.9M75.9 438.6v1.4M76.5 439.6v1.6M77.3 439.4v1.1M78.3 441.0v1.8M79.1 443.3v1.4M79.5 439.7v1.1M80.2 437.4v1.9M81.5 437.8v1.5M82.0 438.2v1.6M82.8 439.4v1.8M83.6 443.6v1.1M84.1 444.7v1.3M85.1 436.3v1.9M86.2 442.0v1.4M87.0 443.9v1.5M88.5 445.4v1.6M88.8 446.6v1.1M89.8 445.4v1.6M90.3 445.3v1.2M91.3 443.4v1.4M92.7 440.5v1.6M93.7 441.5v1.5M94.8 442.0v1.2M94.8 441.4v1.9M96.1 440.8v1.8M96.6 439.4v1.9M97.3 437.8v1.9M97.8 438.5v1.2M98.5 436.5v1.9M99.7 436.3v1.5M100.7 433.3v1.8M101.6 432.8v1.8M101.9 432.3v1.8M103.5 435.5v1.5M104.1 435.4v1.7M105.1 438.0v1.2M105.9 434.5v1.6M106.2 432.1v1.3M107.3 430.8v1.6M107.9 431.8v1.9M109.1 430.6v1.1M109.8 429.9v1.5M110.2 428.2v2.0M111.0 429.0v2.0M112.4 427.0v1.6M112.7 426.5v1.5M113.5 422.2v1.5M114.3 422.8v1.4M114.9 424.7v1.9M116.2 428.3v1.9M116.5 428.5v1.5M117.2 430.4v1.3M117.8 428.0v1.9M118.7 428.5v1.6M119.5 430.3v2.0M120.6 431.9v1.9M121.6 432.9v1.8M122.4 434.2v1.4M123.3 436.4v1.5M123.6 437.1v2.0M124.6 437.2v1.6M124.9 435.6v1.2M125.9 433.1v1.3M126.6 432.8v1.3M127.3 432.8v1.3M127.9 433.2v1.8M128.3 433.7v1.4M128.7 434.1v2.0M129.6 436.1v1.9M130.2 438.3v1.5M131.5 437.0v1.9M131.6 436.8v1.9M132.7 432.0v1.1M133.5 430.6v2.0M133.7 429.9v1.2M134.8 432.2v1.7M135.3 431.2v1.6M136.0 430.0v1.7M136.8 427.4v1.3M137.4 430.0v1.2M138.4 431.5v1.6M139.2 427.4v1.5M140.4 427.3v1.3M141.1 429.0v1.4M141.5 429.5v1.5M142.5 430.6v1.3M143.0 430.5v1.7M144.1 428.7v1.6M145.0 427.6v1.8M145.2 426.2v1.8M146.1 426.4v1.3M147.0 428.0v1.2M147.4 429.7v1.2M148.1 431.4v1.5M149.6 432.7v1.9M150.1 433.5v1.8M151.4 438.5v1.4M151.9 439.4v1.4M153.5 440.2v2.0M153.8 441.2v1.8M154.3 441.9v1.5M155.4 442.8v1.9M156.5 443.3v1.8M157.1 444.1v1.9M158.7 444.6v1.4M159.8 442.4v1.7M159.9 443.5v1.3M160.6 447.4v1.9M160.8 447.0v1.5M161.6 449.6v1.5M163.1 450.8v1.3M163.7 449.5v1.6M164.1 448.3v1.8M164.7 446.1v1.3M165.3 443.2v1.6M166.8 448.8v1.3M167.0 448.9v1.7M168.0 446.3v1.5M169.4 445.7v1.7M170.5 445.4v1.6M171.1 443.9v1.3M171.3 443.2v1.6M172.1 443.3v1.6M173.0 449.5v2.0M173.4 449.4v1.8M173.8 451.0v1.2M175.0 449.4v1.9M175.5 446.6v1.5M176.5 449.6v1.2M176.8 451.0v1.2M177.7 453.5v1.7M178.5 453.8v1.7M179.6 453.2v1.3M180.0 452.8v1.2M181.0 453.2v1.2M181.5 454.3v1.4M182.1 456.3v1.4M183.0 458.3v1.4M183.8 458.2v1.3M184.5 458.1v1.8M185.3 459.8v1.2M186.0 460.9v1.9M186.6 462.0v1.2M187.7 459.5v1.2M188.6 457.9v1.3M189.3 457.2v1.5M190.0 457.5v1.4M190.5 459.5v1.8M190.9 460.8v1.8M191.4 463.1v1.6M192.0 464.9v1.3M192.5 467.9v1.8M193.9 469.7v1.2M194.6 469.5v1.4M195.3 469.1v1.5M195.8 467.4v1.5M197.3 471.9v1.5M197.9 474.4v1.2M198.5 474.8v1.6M200.0 474.5v1.2M200.8 474.9v1.6M202.1 473.5v1.2M202.9 472.4v1.8M203.4 474.4v1.9M204.2 476.8v1.2M205.1 477.0v1.9M206.1 476.0v1.2M206.4 476.9v1.6M207.2 477.5v1.3M208.5 477.3v1.9M208.8 478.0v1.7M210.2 476.1v1.6M210.4 477.3v1.7M212.0 476.8v1.3M212.5 477.4v1.5M213.8 476.7v1.8M214.7 474.8v2.0M215.3 476.1v1.1M216.5 476.1v1.5M217.0 477.2v1.7M217.8 476.9v1.2M219.0 476.6v1.6M220.3 476.2v1.5M220.8 476.6v1.2M222.4 477.2v1.5M222.5 477.2v1.6M224.0 476.3v1.5M224.6 475.4v1.9M225.7 473.8v1.3M226.3 473.5v1.9M227.0 473.5v1.6M228.0 477.1v1.4M228.2 476.3v1.9M228.8 479.7v1.8M229.8 473.2v1.3M230.1 471.3v1.1M231.1 469.6v1.7M231.8 467.5v1.5M232.4 467.5v2.0M233.9 465.8v1.3M234.8 464.9v1.8M235.8 464.2v1.4M236.5 464.1v1.7M237.2 464.7v1.9M237.8 467.1v1.6M238.3 466.6v1.7M239.1 466.6v1.1M240.0 467.3v1.1M241.0 469.2v1.7M241.3 470.0v1.6M242.4 471.3v1.9M243.4 471.1v1.2M243.5 470.2v1.1M245.0 469.9v1.7M245.4 470.5v1.8M246.5 472.2v1.1M247.4 474.0v1.4M248.7 475.3v1.6M248.8 475.4v1.5M249.7 476.0v1.6M251.1 470.8v1.8M251.3 469.6v1.3M251.9 471.3v1.5M252.7 473.2v1.5M253.6 474.6v1.4M254.7 474.2v1.5M255.1 474.0v1.8M256.5 472.3v1.5M257.4 473.5v1.9M257.6 473.5v1.3M258.4 476.7v1.3M259.1 477.6v1.8M259.6 478.5v1.4M260.4 477.6v1.3M261.3 475.0v1.2M262.4 471.9v1.3M263.2 473.1v1.2M263.7 474.3v1.6M264.7 475.5v1.3M265.4 476.6v1.2M266.9 477.2v1.8M267.0 477.2v1.2M267.7 474.0v1.1M268.8 469.2v1.7M269.2 467.5v1.6M270.9 467.7v1.5M271.3 468.7v1.3M272.6 467.3v1.7M273.4 465.3v1.5M273.8 464.6v1.5M274.8 467.9v1.5M275.4 465.6v1.5M275.7 464.8v1.8M276.7 460.7v2.0M277.3 460.6v1.8M278.2 460.8v1.6M279.4 463.8v1.7M279.9 464.0v2.0M280.2 462.3v1.8M280.8 461.1v1.3M281.3 458.6v1.5M282.1 457.9v1.3M283.4 461.9v1.6M283.8 464.5v1.3M284.9 464.1v1.7M285.1 462.2v2.0M286.1 459.2v1.5M286.6 457.8v1.9M287.7 456.7v1.4M288.2 455.8v1.3M289.0 456.7v1.4M290.1 458.1v1.7M291.5 456.4v1.9M292.4 455.2v1.8M293.1 455.8v1.1M294.1 456.3v1.2M294.5 456.8v1.4M295.6 459.3v1.8M296.1 459.9v1.8M297.1 460.6v1.9M297.7 461.1v1.8M298.5 464.1v1.3M299.1 466.8v1.5M299.8 467.6v1.5M300.3 467.6v1.9M301.9 471.1v1.4M303.1 473.8v1.2M303.1 473.4v1.6M304.4 474.9v1.6M305.8 474.3v1.1M306.3 474.7v1.4M307.3 474.4v1.3M308.0 474.4v1.8M309.2 470.3v1.6M309.9 468.1v2.0M310.6 468.7v1.4M311.8 469.8v1.8M313.0 474.2v1.1M313.1 473.8v1.3M314.7 473.8v1.8M315.6 474.6v1.7M316.6 476.7v1.7M317.6 476.7v1.3M318.5 476.4v1.7M319.5 477.1v1.6M320.0 477.5v1.4M321.2 477.3v1.9M321.6 478.2v1.2M323.4 477.4v1.1M324.0 476.0v2.0M324.8 474.8v1.7M325.5 473.8v1.1M326.4 472.6v2.0M327.3 475.6v1.7M328.8 476.5v1.3M329.7 477.5v1.8M330.4 475.9v1.7M330.8 476.4v1.7M331.3 475.6v1.8M332.5 471.2v1.8M333.4 473.3v1.2M334.2 473.2v1.7M335.0 474.0v1.7M335.9 473.0v1.8M336.6 474.5v1.4M337.5 475.6v1.8M338.7 478.8v1.6M339.0 478.9v1.9M339.8 483.8v1.8M340.0 484.3v1.3M341.1 485.5v1.9M341.8 483.9v1.6M342.4 478.8v1.8M342.7 482.8v1.2M343.2 491.1v1.9M344.1 493.7v1.5M344.5 494.3v1.8M345.1 493.8v1.8M346.0 494.4v1.9M346.6 499.7v1.3M347.0 502.4v1.7M347.9 513.2v1.2M349.4 518.0v1.4M349.9 516.6v1.6M350.3 514.0v1.1M351.2 509.4v1.6M351.7 504.5v1.5M352.6 505.0v1.3M353.0 505.2v1.2M354.1 504.8v1.9M354.9 506.9v1.6M355.1 505.1v2.0M356.5 500.8v1.7M357.2 498.1v1.2M357.6 497.5v1.3M358.7 497.4v1.9M359.2 497.4v1.7M359.4 498.3v1.2M360.4 501.7v1.4M360.7 503.3v1.3M361.6 504.6v1.3M362.3 508.3v1.7M362.5 508.6v1.9M363.7 511.7v1.2M363.8 509.7v1.9M364.7 505.9v1.8M365.4 501.2v1.3M366.1 496.8v1.6M366.4 496.9v1.2M367.4 496.4v1.3M367.8 495.5v1.9M368.5 498.0v1.7M369.8 499.6v1.3M370.7 498.5v2.0M371.3 500.2v1.9M372.9 502.8v2.0M373.9 503.2v1.2M374.8 503.2v1.3M375.6 502.9v1.6M375.7 502.8v1.7M376.3 502.9v1.6M377.0 506.3v1.3M378.3 509.7v1.3M379.1 510.0v1.7M379.9 508.3v1.4M380.3 508.2v1.9M381.2 503.8v1.3M381.5 502.2v1.2M381.9 499.7v1.6M382.8 497.1v1.7M383.7 495.5v1.7M384.3 497.3v2.0M385.3 498.7v1.6M386.2 500.0v1.3M386.4 498.7v1.1M387.3 489.8v1.3M388.1 483.4v1.7M389.3 484.9v1.1M389.7 485.2v1.4M390.3 483.8v1.2M390.8 483.3v1.8M392.3 477.0v1.4M393.0 480.3v1.6M393.6 486.9v1.3M394.0 484.2v2.0M394.9 476.2v1.9M395.9 480.2v1.3M396.5 483.0v1.6M397.3 484.7v1.1M398.7 484.5v1.8M399.3 486.1v1.9M399.8 486.4v1.7M400.5 487.1v1.7M401.4 488.0v2.0M402.2 486.6v1.7M403.7 483.6v1.3M404.2 483.4v1.2M405.0 483.4v1.4M405.7 482.3v1.6M407.1 479.9v1.7M407.8 479.0v1.7M408.3 475.9v1.3M409.1 474.3v1.1M410.5 472.9v1.6M410.8 472.2v2.0M411.3 476.1v1.9M411.9 477.6v1.4M412.9 478.4v1.3M413.8 480.0v1.4M414.8 489.5v1.9M415.5 489.5v1.8M416.1 484.0v1.9M416.8 480.4v1.1M417.2 479.5v1.6M418.0 480.4v1.6M418.4 482.1v1.8M419.1 483.9v1.4M420.4 485.7v1.5M420.8 485.0v1.4M422.1 484.5v1.9M423.0 485.1v2.0M423.4 485.9v1.1M424.1 486.3v1.5M424.7 487.1v2.0M425.6 486.3v1.5M426.3 483.9v2.0M427.0 482.1v1.4M428.2 480.6v2.0M428.9 483.9v2.0M429.9 485.1v1.3M431.2 482.9v1.6M431.8 484.2v1.7M432.4 488.1v1.2M432.8 489.7v1.3M433.5 491.5v1.6M434.3 492.3v1.1M435.0 492.2v1.1M436.4 489.5v1.7M437.0 486.8v1.6M437.8 486.1v1.6M438.2 485.5v1.8M438.8 484.1v1.3M440.3 486.2v1.2M441.3 487.3v1.7M441.7 486.9v1.3M442.9 486.3v1.5M443.2 483.2v1.9M444.0 482.0v1.3M445.0 484.5v1.9M445.8 485.9v1.4M446.4 487.3v1.3M447.3 489.1v1.3M447.8 492.0v1.3M448.5 494.2v2.0M449.6 496.9v1.6M450.3 498.6v1.2M450.8 502.5v1.3M451.4 504.7v1.7M452.0 504.7v1.2M453.0 499.9v1.2M453.6 495.0v1.2M454.0 492.6v2.0M454.7 491.9v1.5M455.5 489.6v1.3M456.0 489.7v1.6M457.2 490.4v1.2M457.5 490.7v1.8M458.7 492.9v1.5M459.2 491.1v1.9M460.1 491.1v1.6M461.2 494.9v1.4M461.7 492.1v1.4M462.9 490.4v1.8M463.1 491.5v1.3M464.4 494.3v1.4M465.3 495.8v1.9M466.2 496.7v1.3M467.3 499.7v1.1M467.6 499.9v1.4M468.1 497.4v1.7M469.3 495.7v1.7M469.6 496.5v1.4M470.8 495.6v1.4M471.7 493.7v1.1M472.0 492.1v1.8M473.5 491.8v1.7M474.4 492.7v1.4M475.6 493.7v1.5M476.1 496.5v1.7M476.3 496.2v1.7M477.5 501.1v1.8M477.9 501.1v1.8M478.7 501.0v1.6M478.8 500.8v1.5M479.6 499.4v1.2M480.1 502.9v1.6M481.2 505.7v1.4M481.3 505.7v1.6M482.4 507.2v1.8M483.4 508.4v1.5M483.9 509.8v1.4M484.7 510.3v1.4M486.0 512.2v1.4M486.9 512.2v1.2M488.1 510.4v1.8M488.7 511.0v1.2M489.0 511.8v1.6M489.9 513.5v1.7M490.6 513.5v1.3M491.0 512.8v1.9M492.0 509.6v1.7M492.8 507.9v1.8M493.7 508.3v1.8M494.5 509.0v1.6M495.1 510.9v1.1M496.1 513.2v1.7M496.6 513.8v1.2M497.2 511.7v1.7M497.8 512.5v1.2M498.4 515.9v1.8M499.3 518.6v1.8M499.6 519.0v1.6M500.3 518.6v1.5M501.8 518.5v1.4M502.2 516.7v1.3M502.7 513.4v1.5M503.7 508.4v2.0M504.3 506.6v1.2M504.7 506.2v2.0M505.9 503.8v1.4M506.3 504.0v1.7M507.3 498.7v1.7M508.1 501.9v1.6M508.6 501.6v1.3M509.2 496.9v1.3M510.2 485.2v1.3M510.8 479.0v1.6M511.7 478.3v1.5M512.3 476.7v1.9M513.1 477.8v1.2M513.3 478.7v1.5M514.5 484.0v1.8M515.2 485.3v1.3M515.5 485.7v1.3M516.8 486.5v1.5M517.5 486.8v1.6M517.8 486.2v1.8M519.2 483.1v1.2M520.2 479.9v1.7M521.0 476.6v1.2M521.5 476.2v1.7M522.1 477.3v1.5M522.7 479.6v1.1M523.4 482.8v1.6M524.1 484.9v1.2M524.9 481.8v2.0M525.4 477.3v1.2M526.8 462.7v1.1M527.4 458.4v1.5M528.4 458.2v1.5M528.6 458.8v1.4M529.9 462.7v1.3M530.4 464.3v1.4M530.8 465.3v1.4M532.1 465.8v1.1M533.2 464.2v1.3M533.6 463.0v1.6M534.9 458.3v1.1M535.4 454.0v1.8M535.8 454.4v1.4M537.0 456.0v1.7M537.6 458.4v1.7M538.2 459.6v1.2M538.8 460.4v1.5M539.5 460.7v1.4M540.1 461.0v1.5M541.1 462.9v1.3M541.6 462.1v1.4M542.6 459.0v1.4M542.7 458.8v1.3M543.9 454.3v1.8M544.6 453.2v1.9M545.7 449.5v1.2M547.0 447.9v1.5M547.9 448.7v1.7M548.9 447.7v1.6M549.9 445.7v1.4M550.3 444.0v1.6M551.9 441.6v1.3M552.6 441.8v1.7M553.0 440.7v1.5M554.1 440.8v1.6M554.8 440.0v1.1M555.7 437.0v1.2M556.0 436.6v1.2M556.9 435.7v1.8M557.3 435.6v1.6M558.1 435.5v1.8M559.0 432.4v1.8M559.7 430.1v1.5M560.2 428.7v1.2M560.8 429.2v1.8M561.7 433.4v1.8M561.8 432.9v1.2M562.7 439.8v1.9M563.1 441.3v1.3M563.9 444.8v1.8M565.4 446.0v1.7M566.2 444.0v1.5M566.4 443.3v1.8M567.2 440.8v1.9M568.0 439.9v1.9M568.6 441.7v1.3M569.4 441.9v1.3M570.1 442.8v2.0M570.6 445.2v1.9M571.8 444.2v1.4M572.4 440.8v1.9M573.2 436.7v1.5M573.7 434.5v1.9M575.0 434.1v1.3M575.4 434.6v1.1M576.1 435.0v1.9M577.1 437.7v1.7M578.3 434.4v1.9M579.5 432.9v1.1M579.9 432.6v1.6M580.4 433.0v1.2M580.9 436.3v1.2M581.5 437.2v1.5M582.5 435.2v1.6M583.6 433.3v1.9M584.4 433.0v2.0M585.3 434.8v1.3M586.0 432.4v1.6M587.0 432.1v1.1M587.7 434.9v1.6M588.7 438.8v1.5M589.1 439.9v1.4M589.8 441.3v2.0M590.5 441.1v1.9M591.1 442.6v1.3M592.5 441.7v1.9M593.1 442.3v1.4M593.4 443.1v2.0M594.7 445.5v1.6M595.0 446.7v1.8M596.4 447.2v1.5M597.3 448.5v1.4M597.8 449.3v1.7M598.5 454.3v1.6M599.1 455.0v1.2M600.3 454.0v1.8M600.9 452.0v1.8M602.5 451.2v1.9M602.9 451.9v1.8M603.3 453.8v1.2M604.4 458.0v1.5M604.7 459.4v1.7M605.6 460.4v1.8M606.7 458.8v1.6M607.4 455.7v1.4M608.1 451.1v1.2M609.1 452.6v1.4M610.0 445.5v1.2M610.3 443.4v1.5M611.4 441.7v1.5M612.7 438.4v1.4M613.7 436.7v1.4M614.7 435.7v1.3M615.2 435.9v1.4M616.2 437.2v1.6M616.9 438.9v1.8M617.3 438.0v1.9M617.9 433.0v1.5M618.6 428.9v1.8M619.3 429.3v1.1M620.4 431.6v1.7M620.6 432.4v1.7M622.1 434.0v2.5M623.0 435.6v2.3M623.5 434.8v2.5M624.4 431.4v1.7M624.5 432.2v2.0M625.3 425.9v1.9M626.3 429.8v1.6M627.2 444.5v3.0M627.4 447.0v2.4M628.4 453.3v2.5M629.4 452.7v1.8M629.5 453.3v2.4M630.5 455.1v2.1M631.0 462.9v2.7M631.9 467.6v3.1M632.1 465.0v2.6M633.6 476.2v2.5M634.4 479.8v2.9M635.0 481.3v2.0M635.9 483.5v3.1M636.1 482.4v1.7M637.1 476.9v2.6M638.2 464.6v1.8M638.5 460.3v2.0M639.7 449.9v2.5M640.7 449.5v2.9M641.2 450.9v2.2M641.6 450.0v2.6M642.1 453.7v2.7M643.4 457.8v2.9M644.2 453.2v3.2M644.4 456.8v2.8M645.5 461.9v1.7M645.9 464.1v1.7M646.3 465.2v2.9M647.4 466.2v1.6M647.8 467.6v2.6M648.6 466.6v2.3M649.4 468.6v2.0M650.5 470.4v1.7M651.1 474.6v2.3M651.4 476.4v2.6M652.2 481.6v2.6M652.8 482.0v3.1M654.4 499.4v1.8M655.0 501.8v1.7M655.2 500.2v2.3M656.5 494.5v1.8M657.1 494.7v1.7M657.9 486.1v3.0M658.6 478.0v2.8M659.0 473.9v1.8M659.5 471.9v2.4M660.7 466.9v2.5M661.1 465.0v2.7M661.5 461.7v3.2M662.6 463.2v2.9M663.5 469.7v3.1M664.2 471.8v2.2M664.5 473.9v2.7M665.3 477.0v1.8M666.0 465.5v3.2M666.7 461.7v2.3M667.5 465.4v2.6M668.2 462.0v2.8M668.5 460.7v1.8M669.3 454.7v1.7M670.1 448.9v2.8M670.5 452.0v2.2M671.3 458.6v2.0M672.0 456.6v1.7M672.2 456.8v1.9M672.9 453.9v1.9M673.7 455.0v2.7M674.4 450.3v2.7M674.8 447.3v1.6M675.3 439.6v2.5M675.8 435.7v1.5M677.0 432.8v2.5M677.3 432.6v1.9M678.1 436.8v1.6M678.8 438.2v2.3M679.1 437.0v2.7M680.1 426.7v3.1M680.8 423.0v3.0M681.5 423.9v2.3M682.5 430.7v2.9M682.9 431.4v1.5M683.6 435.2v1.9M684.1 435.4v2.4M684.9 438.8v3.1M685.3 440.9v2.6M686.0 442.3v2.6M686.7 450.1v3.0M687.2 448.6v3.2M688.1 454.8v2.4M689.1 451.6v2.8M689.5 447.5v1.7M690.2 445.2v2.5M691.0 451.4v2.6M691.9 457.1v2.4M692.6 459.2v2.6M692.9 457.5v3.1M693.4 455.8v1.8M694.4 450.0v2.1M695.0 447.4v2.8M695.4 445.4v2.0M696.8 440.4v1.8M697.6 438.9v2.0M697.7 438.5v2.2M698.7 418.7v2.0M699.1 421.1v2.9M699.8 426.2v2.8M700.6 418.5v2.8M701.2 414.1v2.4M702.4 418.8v2.8M703.3 418.2v2.5M703.5 417.1v1.9M704.5 416.9v2.7M704.7 419.1v2.0M705.6 420.9v2.8M706.5 413.5v2.1M707.3 424.3v2.1M707.9 424.5v2.4M708.4 423.5v1.6M709.3 418.4v2.9M709.9 421.1v2.5M710.7 421.1v2.9M711.3 420.5v2.4M712.1 416.4v2.9M712.3 414.9v2.7M713.2 411.9v1.6M713.8 412.0v1.9M714.9 418.1v2.9M715.9 416.5v2.9M716.3 414.5v1.7M716.9 417.4v2.3M717.5 423.2v1.7M718.7 422.7v2.1M719.2 421.7v2.8M720.4 418.1v2.4M720.5 419.6v2.2M721.9 422.0v2.5M722.4 417.7v2.5M723.7 415.7v3.1M724.4 423.1v2.3M724.7 426.6v2.7M725.3 426.9v2.2M726.0 422.1v2.4M726.6 434.2v1.8M727.5 435.1v2.7M728.3 432.1v3.1M728.4 433.2v1.8M729.4 433.4v1.9M729.8 430.7v3.2M730.5 416.8v1.8M732.3 420.4v1.7M732.6 420.5v2.8M734.2 421.3v2.9M734.4 422.9v1.7M735.4 429.0v1.9M736.3 436.9v3.2M737.0 434.8v2.2M737.2 434.4v1.5M738.0 428.0v1.5M738.7 419.5v1.6M739.0 417.2v2.0M739.9 414.5v1.8M740.8 409.4v2.2M741.0 408.9v1.8M741.9 403.5v2.2M742.8 396.5v2.3M743.5 386.4v2.7M744.4 390.1v2.3M745.0 392.7v1.6M745.4 391.3v2.2M746.3 392.7v1.6M747.1 394.4v1.6M747.3 392.9v3.1M748.3 401.7v3.1M748.5 401.7v2.8M749.6 396.1v2.7M749.8 397.9v2.4M751.1 400.6v3.1M751.5 397.8v2.9M752.2 404.9v1.6M752.8 411.2v2.2M753.6 414.0v1.5M754.1 417.1v2.6M754.8 419.1v1.7M755.5 420.0v1.7M756.4 417.3v2.1M757.3 408.2v1.8M758.2 413.7v1.6M758.8 418.3v2.4M759.3 419.0v2.5M760.1 424.6v2.9M760.7 430.8v1.6M761.1 430.0v3.0M761.8 430.5v1.9M762.4 429.7v1.7M764.0 428.7v2.6M764.6 430.2v2.8M764.9 429.9v1.5M766.4 417.0v3.1M767.0 412.4v3.0M767.2 411.1v2.9M768.0 410.8v3.1M768.7 413.2v2.6M769.3 413.7v3.1M769.7 413.6v1.9M770.3 411.9v1.9M771.0 412.3v2.2M772.1 414.0v1.9M772.3 413.8v1.9M773.6 410.0v2.6M774.0 411.2v2.0M774.3 410.1v2.1M775.3 399.7v2.3M776.0 396.0v1.8M776.8 393.5v2.7M778.0 398.9v3.1M778.6 403.7v2.9M779.5 397.5v2.6M779.6 396.4v3.0M780.7 406.2v2.6M781.0 408.0v3.2M781.9 406.1v1.9M782.1 403.3v2.9M783.0 401.4v2.7M783.5 404.4v2.4M784.2 409.3v2.0M785.1 405.5v1.8M785.5 404.0v2.6M786.4 399.3v1.6M786.6 401.0v2.2M787.4 406.3v1.7M788.0 406.9v1.9M788.4 404.5v2.1M789.6 405.9v1.6M790.1 408.1v2.5M791.1 411.2v1.7M791.5 408.6v3.0M792.2 395.7v3.1M793.5 388.6v2.3M793.8 387.7v2.1M794.9 389.3v1.8M795.3 391.4v1.5M796.2 396.6v1.9M796.9 396.3v2.6M797.7 398.7v3.0M798.3 394.4v1.8M798.9 392.2v1.9M799.3 390.4v1.7M800.2 388.3v3.1M800.5 390.6v1.9M801.4 386.6v3.1M802.4 387.1v2.9M803.7 392.6v2.3M804.0 393.0v2.2M804.4 393.7v2.1M805.0 396.2v1.9M806.0 402.1v1.7M806.4 404.3v1.8M807.4 406.7v3.0M807.9 404.1v2.5M808.6 399.8v3.0M809.6 406.1v3.1M809.7 406.0v1.7M810.4 400.8v2.0M811.2 395.3v2.4M812.4 396.8v1.7M813.4 400.1v2.5M814.5 399.2v1.8M814.9 398.3v2.7M815.4 395.4v2.1M816.1 397.5v2.6M817.3 397.4v1.5M818.1 396.5v2.6M819.0 400.4v1.9M819.6 403.5v1.9M820.2 406.6v2.7M820.7 408.1v1.7M821.0 407.8v1.6M821.8 400.9v2.2M822.7 393.4v2.5M823.0 392.8v2.3M823.8 387.9v1.8M824.5 385.4v2.9M825.2 385.8v3.1M825.7 387.7v1.9M826.8 392.9v2.5M826.9 393.4v2.7M827.6 395.8v1.5M828.3 393.3v1.9M829.7 388.4v1.5M830.5 385.1v1.8M830.8 385.7v2.3M831.4 384.6v1.8M832.5 378.8v2.7M833.2 377.1v2.3M834.0 374.5v1.6M834.4 373.0v2.7M835.1 371.7v2.9M835.4 372.6v2.7M836.0 376.0v1.7M836.6 380.5v2.5M837.5 385.7v1.9M838.1 386.4v2.7M838.6 389.2v2.0M839.7 395.0v1.8M840.4 396.4v1.8M841.1 394.4v2.9M841.9 400.9v2.0M842.2 402.9v1.7M843.3 389.8v1.8M843.9 393.9v1.8M844.8 394.6v2.1M845.7 397.9v1.6M846.2 400.5v2.6M846.7 401.5v2.3M847.4 404.2v2.3M848.1 407.9v1.7M848.5 409.7v1.6M849.1 412.4v2.6M849.7 411.8v2.8M850.3 408.7v2.2M851.3 399.6v2.8M852.4 393.2v1.6M853.9 404.6v1.8M854.3 407.3v1.7M855.2 403.3v1.7M855.8 398.0v3.0M856.4 398.9v2.0M857.5 399.9v1.7M857.8 401.3v2.1M858.5 402.8v3.2M859.6 399.6v2.0M860.0 398.3v1.8M861.2 395.3v2.5M861.8 396.9v3.1M862.7 398.1v2.0M863.0 399.0v2.1M863.5 398.1v3.0M864.6 402.5v2.8M865.1 406.4v3.2M865.8 414.0v2.6M866.6 408.7v2.4M867.4 405.5v2.1M868.3 405.1v1.7M869.0 402.1v2.6M869.8 399.7v2.3M871.0 397.5v1.9M871.4 396.0v2.1M872.6 395.7v1.6M873.2 398.1v2.3M874.1 395.2v3.1M875.2 394.6v2.3M875.5 395.9v2.5M876.7 394.7v2.4M877.4 393.8v2.6M878.0 391.1v2.1M878.5 389.0v3.1M879.3 387.8v2.2M879.9 388.3v2.8M880.4 391.2v2.9M881.7 392.7v2.2M882.5 391.1v1.8M883.0 387.7v2.7M883.7 385.3v2.6M885.0 381.2v2.9M885.8 388.5v2.4M886.2 390.9v1.9M887.1 387.4v3.0M887.9 390.1v2.5M888.7 389.6v2.9M889.2 391.3v2.0M890.1 393.8v1.5M890.9 392.3v1.9M891.4 388.9v1.8M891.9 386.4v2.5M892.8 382.8v2.7M893.9 383.7v3.1M894.1 383.7v1.6M895.1 393.0v2.3M896.0 392.0v1.9M896.6 391.3v2.6M897.4 394.9v1.6M898.5 394.5v1.8M899.5 392.9v3.2M900.5 398.0v2.5M901.2 398.1v1.6M902.3 397.6v2.2M903.5 395.3v2.2M904.2 395.9v1.5M904.8 396.8v3.1M905.8 394.6v2.0M907.0 393.6v1.7M907.8 390.6v2.8M908.1 392.7v2.4M908.6 391.8v1.7M909.1 395.0v2.3M910.0 395.9v3.0M911.0 402.3v2.3M911.2 403.2v2.8M911.9 403.5v2.2M912.6 403.5v2.0M913.0 403.3v1.5M913.6 400.8v1.7M914.5 392.3v1.9M915.9 388.2v3.1M916.1 390.7v2.2M917.1 393.3v2.2M917.8 381.7v2.8M917.9 382.4v1.7M918.9 380.3v1.7M919.2 377.7v2.5M920.0 377.8v2.2M920.6 375.4v1.9M922.0 376.3v1.8M922.5 373.7v2.8M923.5 373.7v1.6M924.1 374.3v2.3M924.6 376.5v2.2M925.7 388.5v1.7M926.0 386.4v2.7M927.1 383.6v2.4M927.7 381.4v2.6M928.5 380.2v3.1M929.3 387.3v2.1M930.2 387.6v2.8M931.0 389.1v2.7M931.2 389.3v2.5M932.1 391.7v3.1M933.4 384.4v2.8M933.9 385.1v2.5M935.0 382.6v2.8M935.2 382.2v3.0M936.4 379.5v1.9M936.7 380.6v2.7M938.0 380.2v2.0M939.0 381.6v3.2M939.6 384.2v2.8M940.1 386.3v2.3M941.1 384.6v2.7M942.1 388.0v2.8M942.6 388.9v2.1M942.9 390.1v2.3M944.1 389.5v2.3M944.8 387.4v2.7M945.2 389.7v2.9M946.1 390.4v2.1M947.4 394.2v2.8M948.4 387.9v1.9M949.1 385.0v2.8M949.7 384.2v2.3M950.5 384.8v2.8M951.1 381.9v2.9M951.7 384.0v2.4M952.4 385.5v2.3M953.1 385.3v2.1M954.4 386.8v3.0M955.3 382.8v3.2M956.0 383.8v2.4M956.0 383.7v1.7M957.0 382.3v2.5M957.6 385.7v3.1M959.0 386.4v2.6M959.4 384.3v3.1M960.1 386.3v2.4M961.3 395.7v1.7M962.1 394.3v3.1M963.0 391.0v1.6M963.9 386.9v2.5M964.1 383.6v3.0M964.5 383.7v1.8M965.2 381.1v3.1M966.1 382.1v3.1M966.8 380.4v1.6M967.1 382.7v2.0M968.0 396.1v2.6"/></g>
<path d="M4.9 364.6 H1017.3" fill="none" stroke="#9c9c9c" stroke-width="1"/>
<path d="M970.6 364.6 V528.2 H4.9" fill="none" stroke="#b4b4b4" stroke-width="1"/>
<g style="filter:grayscale(1)">
<text y="374.50" font-size="10.1" fill="#989898" stroke="#989898" stroke-width="0.22" font-family="'Liberation Sans','IPAGothic',sans-serif"><tspan x="7.57" textLength="2.30" lengthAdjust="spacingAndGlyphs">[</tspan><tspan x="11.14" font-size="9.7" font-family="'Liberation Mono','IPAGothic',monospace" textLength="9.68" lengthAdjust="spacingAndGlyphs">金</tspan><tspan x="22.09"> </tspan><tspan x="25.78" textLength="4.60" lengthAdjust="spacingAndGlyphs">2</tspan><tspan x="30.62" textLength="4.60" lengthAdjust="spacingAndGlyphs">3</tspan><tspan x="36.61" textLength="2.30" lengthAdjust="spacingAndGlyphs">/</tspan><tspan x="40.30" textLength="4.60" lengthAdjust="spacingAndGlyphs">1</tspan><tspan x="45.14" textLength="4.60" lengthAdjust="spacingAndGlyphs">2</tspan><tspan x="51.13"> </tspan><tspan x="54.82" textLength="4.60" lengthAdjust="spacingAndGlyphs">7</tspan><tspan x="60.81" textLength="2.30" lengthAdjust="spacingAndGlyphs">,</tspan><tspan x="64.50" textLength="4.60" lengthAdjust="spacingAndGlyphs">8</tspan><tspan x="69.34" textLength="4.60" lengthAdjust="spacingAndGlyphs">7</tspan><tspan x="74.18" textLength="4.60" lengthAdjust="spacingAndGlyphs">0</tspan><tspan x="78.90" font-size="9.7" font-family="'Liberation Mono','IPAGothic',monospace" textLength="9.68" lengthAdjust="spacingAndGlyphs">×</tspan><tspan x="88.70" textLength="4.60" lengthAdjust="spacingAndGlyphs">1</tspan><tspan x="94.69" textLength="2.30" lengthAdjust="spacingAndGlyphs">.</tspan><tspan x="98.38" textLength="4.60" lengthAdjust="spacingAndGlyphs">0</tspan><tspan x="103.22" textLength="4.60" lengthAdjust="spacingAndGlyphs">0</tspan><tspan x="109.21" textLength="2.30" lengthAdjust="spacingAndGlyphs">]</tspan><tspan x="112.78" font-size="9.7" font-family="'Liberation Mono','IPAGothic',monospace" textLength="9.68" lengthAdjust="spacingAndGlyphs">－</tspan><tspan x="123.73" textLength="2.30" lengthAdjust="spacingAndGlyphs">[</tspan><tspan x="127.30" font-size="9.7" font-family="'Liberation Mono','IPAGothic',monospace" textLength="19.36" lengthAdjust="spacingAndGlyphs">白金</tspan><tspan x="147.93"> </tspan><tspan x="151.62" textLength="4.60" lengthAdjust="spacingAndGlyphs">2</tspan><tspan x="156.46" textLength="4.60" lengthAdjust="spacingAndGlyphs">3</tspan><tspan x="162.45" textLength="2.30" lengthAdjust="spacingAndGlyphs">/</tspan><tspan x="166.14" textLength="4.60" lengthAdjust="spacingAndGlyphs">1</tspan><tspan x="170.98" textLength="4.60" lengthAdjust="spacingAndGlyphs">2</tspan><tspan x="176.97"> </tspan><tspan x="180.66" textLength="4.60" lengthAdjust="spacingAndGlyphs">4</tspan><tspan x="186.65" textLength="2.30" lengthAdjust="spacingAndGlyphs">,</tspan><tspan x="190.34" textLength="4.60" lengthAdjust="spacingAndGlyphs">1</tspan><tspan x="195.18" textLength="4.60" lengthAdjust="spacingAndGlyphs">4</tspan><tspan x="200.02" textLength="4.60" lengthAdjust="spacingAndGlyphs">4</tspan><tspan x="204.74" font-size="9.7" font-family="'Liberation Mono','IPAGothic',monospace" textLength="9.68" lengthAdjust="spacingAndGlyphs">×</tspan><tspan x="214.54" textLength="4.60" lengthAdjust="spacingAndGlyphs">1</tspan><tspan x="220.53" textLength="2.30" lengthAdjust="spacingAndGlyphs">.</tspan><tspan x="224.22" textLength="4.60" lengthAdjust="spacingAndGlyphs">0</tspan><tspan x="229.06" textLength="4.60" lengthAdjust="spacingAndGlyphs">0</tspan><tspan x="235.05" textLength="2.30" lengthAdjust="spacingAndGlyphs">]</tspan><tspan x="239.89"> </tspan><tspan x="243.46" font-size="9.7" font-family="'Liberation Mono','IPAGothic',monospace" textLength="19.36" lengthAdjust="spacingAndGlyphs">終値</tspan><tspan x="264.09"> </tspan><tspan x="267.66" font-size="9.7" font-family="'Liberation Mono','IPAGothic',monospace" textLength="19.36" lengthAdjust="spacingAndGlyphs">時刻</tspan><tspan x="288.29" textLength="2.30" lengthAdjust="spacingAndGlyphs">:</tspan><tspan x="291.98" textLength="4.60" lengthAdjust="spacingAndGlyphs">0</tspan><tspan x="296.82" textLength="4.60" lengthAdjust="spacingAndGlyphs">6</tspan><tspan x="302.81" textLength="2.30" lengthAdjust="spacingAndGlyphs">:</tspan><tspan x="306.50" textLength="4.60" lengthAdjust="spacingAndGlyphs">0</tspan><tspan x="311.34" textLength="4.60" lengthAdjust="spacingAndGlyphs">0</tspan><tspan x="317.33"> </tspan><tspan x="321.02" textLength="4.60" lengthAdjust="spacingAndGlyphs">3</tspan><tspan x="327.01" textLength="2.30" lengthAdjust="spacingAndGlyphs">,</tspan><tspan x="330.70" textLength="4.60" lengthAdjust="spacingAndGlyphs">7</tspan><tspan x="335.54" textLength="4.60" lengthAdjust="spacingAndGlyphs">2</tspan><tspan x="340.38" textLength="4.60" lengthAdjust="spacingAndGlyphs">6</tspan></text>
<text y="536.10" font-size="10.1" fill="#a8a8a8" stroke="#a8a8a8" stroke-width="0.22" font-family="'Liberation Sans','IPAGothic',sans-serif"><tspan x="46.62" textLength="4.60" lengthAdjust="spacingAndGlyphs">0</tspan><tspan x="51.46" textLength="4.60" lengthAdjust="spacingAndGlyphs">9</tspan></text>
<text y="536.10" font-size="10.1" fill="#a8a8a8" stroke="#a8a8a8" stroke-width="0.22" font-family="'Liberation Sans','IPAGothic',sans-serif"><tspan x="95.52" textLength="4.60" lengthAdjust="spacingAndGlyphs">1</tspan><tspan x="100.36" textLength="4.60" lengthAdjust="spacingAndGlyphs">0</tspan></text>
<text y="536.10" font-size="10.1" fill="#a8a8a8" stroke="#a8a8a8" stroke-width="0.22" font-family="'Liberation Sans','IPAGothic',sans-serif"><tspan x="143.42" textLength="4.60" lengthAdjust="spacingAndGlyphs">1</tspan><tspan x="148.26" textLength="4.60" lengthAdjust="spacingAndGlyphs">1</tspan></text>
<text y="536.10" font-size="10.1" fill="#a8a8a8" stroke="#a8a8a8" stroke-width="0.22" font-family="'Liberation Sans','IPAGothic',sans-serif"><tspan x="191.22" textLength="4.60" lengthAdjust="spacingAndGlyphs">1</tspan><tspan x="196.06" textLength="4.60" lengthAdjust="spacingAndGlyphs">2</tspan></text>
<text y="536.10" font-size="10.1" fill="#a8a8a8" stroke="#a8a8a8" stroke-width="0.22" font-family="'Liberation Sans','IPAGothic',sans-serif"><tspan x="240.02" textLength="4.60" lengthAdjust="spacingAndGlyphs">1</tspan><tspan x="244.86" textLength="4.60" lengthAdjust="spacingAndGlyphs">3</tspan></text>
<text y="536.10" font-size="10.1" fill="#a8a8a8" stroke="#a8a8a8" stroke-width="0.22" font-family="'Liberation Sans','IPAGothic',sans-serif"><tspan x="286.42" textLength="4.60" lengthAdjust="spacingAndGlyphs">1</tspan><tspan x="291.26" textLength="4.60" lengthAdjust="spacingAndGlyphs">4</tspan></text>
<text y="536.10" font-size="10.1" fill="#a8a8a8" stroke="#a8a8a8" stroke-width="0.22" font-family="'Liberation Sans','IPAGothic',sans-serif"><tspan x="322.24" textLength="4.60" lengthAdjust="spacingAndGlyphs">1</tspan><tspan x="327.08" textLength="4.60" lengthAdjust="spacingAndGlyphs">5</tspan></text>
<text y="536.10" font-size="10.1" fill="#a8a8a8" stroke="#a8a8a8" stroke-width="0.22" font-family="'Liberation Sans','IPAGothic',sans-serif"><tspan x="343.52" textLength="4.60" lengthAdjust="spacingAndGlyphs">1</tspan><tspan x="348.36" textLength="4.60" lengthAdjust="spacingAndGlyphs">6</tspan></text>
<text y="536.10" font-size="10.1" fill="#a8a8a8" stroke="#a8a8a8" stroke-width="0.22" font-family="'Liberation Sans','IPAGothic',sans-serif"><tspan x="367.27" textLength="4.60" lengthAdjust="spacingAndGlyphs">1</tspan><tspan x="372.11" textLength="4.60" lengthAdjust="spacingAndGlyphs">7</tspan></text>
<text y="536.10" font-size="10.1" fill="#a8a8a8" stroke="#a8a8a8" stroke-width="0.22" font-family="'Liberation Sans','IPAGothic',sans-serif"><tspan x="415.02" textLength="4.60" lengthAdjust="spacingAndGlyphs">1</tspan><tspan x="419.86" textLength="4.60" lengthAdjust="spacingAndGlyphs">8</tspan></text>
<text y="536.10" font-size="10.1" fill="#a8a8a8" stroke="#a8a8a8" stroke-width="0.22" font-family="'Liberation Sans','IPAGothic',sans-serif"><tspan x="461.62" textLength="4.60" lengthAdjust="spacingAndGlyphs">1</tspan><tspan x="466.46" textLength="4.60" lengthAdjust="spacingAndGlyphs">9</tspan></text>
<text y="536.10" font-size="10.1" fill="#a8a8a8" stroke="#a8a8a8" stroke-width="0.22" font-family="'Liberation Sans','IPAGothic',sans-serif"><tspan x="510.32" textLength="4.60" lengthAdjust="spacingAndGlyphs">2</tspan><tspan x="515.16" textLength="4.60" lengthAdjust="spacingAndGlyphs">0</tspan></text>
<text y="536.10" font-size="10.1" fill="#a8a8a8" stroke="#a8a8a8" stroke-width="0.22" font-family="'Liberation Sans','IPAGothic',sans-serif"><tspan x="556.42" textLength="4.60" lengthAdjust="spacingAndGlyphs">2</tspan><tspan x="561.26" textLength="4.60" lengthAdjust="spacingAndGlyphs">1</tspan></text>
<text y="536.10" font-size="10.1" fill="#a8a8a8" stroke="#a8a8a8" stroke-width="0.22" font-family="'Liberation Sans','IPAGothic',sans-serif"><tspan x="601.92" textLength="4.60" lengthAdjust="spacingAndGlyphs">2</tspan><tspan x="606.76" textLength="4.60" lengthAdjust="spacingAndGlyphs">2</tspan></text>
<text y="536.10" font-size="10.1" fill="#a8a8a8" stroke="#a8a8a8" stroke-width="0.22" font-family="'Liberation Sans','IPAGothic',sans-serif"><tspan x="649.62" textLength="4.60" lengthAdjust="spacingAndGlyphs">2</tspan><tspan x="654.46" textLength="4.60" lengthAdjust="spacingAndGlyphs">3</tspan></text>
<text y="536.10" font-size="10.1" fill="#a8a8a8" stroke="#a8a8a8" stroke-width="0.22" font-family="'Liberation Sans','IPAGothic',sans-serif"><tspan x="697.62" textLength="4.60" lengthAdjust="spacingAndGlyphs">0</tspan><tspan x="702.46" textLength="4.60" lengthAdjust="spacingAndGlyphs">0</tspan></text>
<text y="536.10" font-size="10.1" fill="#a8a8a8" stroke="#a8a8a8" stroke-width="0.22" font-family="'Liberation Sans','IPAGothic',sans-serif"><tspan x="745.62" textLength="4.60" lengthAdjust="spacingAndGlyphs">0</tspan><tspan x="750.46" textLength="4.60" lengthAdjust="spacingAndGlyphs">1</tspan></text>
<text y="536.10" font-size="10.1" fill="#a8a8a8" stroke="#a8a8a8" stroke-width="0.22" font-family="'Liberation Sans','IPAGothic',sans-serif"><tspan x="794.22" textLength="4.60" lengthAdjust="spacingAndGlyphs">0</tspan><tspan x="799.06" textLength="4.60" lengthAdjust="spacingAndGlyphs">2</tspan></text>
<text y="536.10" font-size="10.1" fill="#a8a8a8" stroke="#a8a8a8" stroke-width="0.22" font-family="'Liberation Sans','IPAGothic',sans-serif"><tspan x="842.12" textLength="4.60" lengthAdjust="spacingAndGlyphs">0</tspan><tspan x="846.96" textLength="4.60" lengthAdjust="spacingAndGlyphs">3</tspan></text>
<text y="536.10" font-size="10.1" fill="#a8a8a8" stroke="#a8a8a8" stroke-width="0.22" font-family="'Liberation Sans','IPAGothic',sans-serif"><tspan x="890.02" textLength="4.60" lengthAdjust="spacingAndGlyphs">0</tspan><tspan x="894.86" textLength="4.60" lengthAdjust="spacingAndGlyphs">4</tspan></text>
<text y="536.10" font-size="10.1" fill="#a8a8a8" stroke="#a8a8a8" stroke-width="0.22" font-family="'Liberation Sans','IPAGothic',sans-serif"><tspan x="929.62" textLength="4.60" lengthAdjust="spacingAndGlyphs">0</tspan><tspan x="934.46" textLength="4.60" lengthAdjust="spacingAndGlyphs">5</tspan></text>
<text y="536.10" font-size="10.1" fill="#a8a8a8" stroke="#a8a8a8" stroke-width="0.22" font-family="'Liberation Sans','IPAGothic',sans-serif"><tspan x="954.84" textLength="4.60" lengthAdjust="spacingAndGlyphs">0</tspan><tspan x="959.68" textLength="4.60" lengthAdjust="spacingAndGlyphs">6</tspan></text>
<text y="536.10" font-size="10.1" fill="#d8d8d8" stroke="#d8d8d8" stroke-width="0.22" font-weight="bold" font-family="'Liberation Sans','IPAGothic',sans-serif"><tspan x="20.82" textLength="4.60" lengthAdjust="spacingAndGlyphs">0</tspan><tspan x="25.66" textLength="4.60" lengthAdjust="spacingAndGlyphs">6</tspan></text>
<text y="524.60" font-size="10.1" fill="#c0c0c0" stroke="#c0c0c0" stroke-width="0.22" font-family="'Liberation Sans','IPAGothic',sans-serif"><tspan x="697.72" textLength="4.60" lengthAdjust="spacingAndGlyphs">0</tspan><tspan x="702.56" textLength="4.60" lengthAdjust="spacingAndGlyphs">4</tspan></text>
</g>
<clipPath id="ca2"><rect x="970.6" y="364.6" width="46.70" height="175.60"/></clipPath>
<g clip-path="url(#ca2)" style="filter:grayscale(1)">
<text y="371.30" font-size="10.1" fill="#9a9a9a" stroke="#9a9a9a" stroke-width="0.22" font-family="'Liberation Sans','IPAGothic',sans-serif"><tspan x="971.52" textLength="4.60" lengthAdjust="spacingAndGlyphs">3</tspan><tspan x="977.51" textLength="2.30" lengthAdjust="spacingAndGlyphs">,</tspan><tspan x="981.20" textLength="4.60" lengthAdjust="spacingAndGlyphs">7</tspan><tspan x="986.04" textLength="4.60" lengthAdjust="spacingAndGlyphs">4</tspan><tspan x="990.88" textLength="4.60" lengthAdjust="spacingAndGlyphs">0</tspan></text>
<text y="394.10" font-size="10.1" fill="#9a9a9a" stroke="#9a9a9a" stroke-width="0.22" font-family="'Liberation Sans','IPAGothic',sans-serif"><tspan x="971.52" textLength="4.60" lengthAdjust="spacingAndGlyphs">3</tspan><tspan x="977.51" textLength="2.30" lengthAdjust="spacingAndGlyphs">,</tspan><tspan x="981.20" textLength="4.60" lengthAdjust="spacingAndGlyphs">7</tspan><tspan x="986.04" textLength="4.60" lengthAdjust="spacingAndGlyphs">3</tspan><tspan x="990.88" textLength="4.60" lengthAdjust="spacingAndGlyphs">0</tspan></text>
<text y="417.30" font-size="10.1" fill="#9a9a9a" stroke="#9a9a9a" stroke-width="0.22" font-family="'Liberation Sans','IPAGothic',sans-serif"><tspan x="971.52" textLength="4.60" lengthAdjust="spacingAndGlyphs">3</tspan><tspan x="977.51" textLength="2.30" lengthAdjust="spacingAndGlyphs">,</tspan><tspan x="981.20" textLength="4.60" lengthAdjust="spacingAndGlyphs">7</tspan><tspan x="986.04" textLength="4.60" lengthAdjust="spacingAndGlyphs">2</tspan><tspan x="990.88" textLength="4.60" lengthAdjust="spacingAndGlyphs">0</tspan></text>
<text y="440.20" font-size="10.1" fill="#9a9a9a" stroke="#9a9a9a" stroke-width="0.22" font-family="'Liberation Sans','IPAGothic',sans-serif"><tspan x="971.52" textLength="4.60" lengthAdjust="spacingAndGlyphs">3</tspan><tspan x="977.51" textLength="2.30" lengthAdjust="spacingAndGlyphs">,</tspan><tspan x="981.20" textLength="4.60" lengthAdjust="spacingAndGlyphs">7</tspan><tspan x="986.04" textLength="4.60" lengthAdjust="spacingAndGlyphs">1</tspan><tspan x="990.88" textLength="4.60" lengthAdjust="spacingAndGlyphs">0</tspan></text>
<text y="463.15" font-size="10.1" fill="#9a9a9a" stroke="#9a9a9a" stroke-width="0.22" font-family="'Liberation Sans','IPAGothic',sans-serif"><tspan x="971.52" textLength="4.60" lengthAdjust="spacingAndGlyphs">3</tspan><tspan x="977.51" textLength="2.30" lengthAdjust="spacingAndGlyphs">,</tspan><tspan x="981.20" textLength="4.60" lengthAdjust="spacingAndGlyphs">7</tspan><tspan x="986.04" textLength="4.60" lengthAdjust="spacingAndGlyphs">0</tspan><tspan x="990.88" textLength="4.60" lengthAdjust="spacingAndGlyphs">0</tspan></text>
<text y="486.40" font-size="10.1" fill="#9a9a9a" stroke="#9a9a9a" stroke-width="0.22" font-family="'Liberation Sans','IPAGothic',sans-serif"><tspan x="971.52" textLength="4.60" lengthAdjust="spacingAndGlyphs">3</tspan><tspan x="977.51" textLength="2.30" lengthAdjust="spacingAndGlyphs">,</tspan><tspan x="981.20" textLength="4.60" lengthAdjust="spacingAndGlyphs">6</tspan><tspan x="986.04" textLength="4.60" lengthAdjust="spacingAndGlyphs">9</tspan><tspan x="990.88" textLength="4.60" lengthAdjust="spacingAndGlyphs">0</tspan></text>
<text y="509.30" font-size="10.1" fill="#9a9a9a" stroke="#9a9a9a" stroke-width="0.22" font-family="'Liberation Sans','IPAGothic',sans-serif"><tspan x="971.52" textLength="4.60" lengthAdjust="spacingAndGlyphs">3</tspan><tspan x="977.51" textLength="2.30" lengthAdjust="spacingAndGlyphs">,</tspan><tspan x="981.20" textLength="4.60" lengthAdjust="spacingAndGlyphs">6</tspan><tspan x="986.04" textLength="4.60" lengthAdjust="spacingAndGlyphs">8</tspan><tspan x="990.88" textLength="4.60" lengthAdjust="spacingAndGlyphs">0</tspan></text>
<text y="532.40" font-size="10.1" fill="#9a9a9a" stroke="#9a9a9a" stroke-width="0.22" font-family="'Liberation Sans','IPAGothic',sans-serif"><tspan x="971.52" textLength="4.60" lengthAdjust="spacingAndGlyphs">3</tspan><tspan x="977.51" textLength="2.30" lengthAdjust="spacingAndGlyphs">,</tspan><tspan x="981.20" textLength="4.60" lengthAdjust="spacingAndGlyphs">6</tspan><tspan x="986.04" textLength="4.60" lengthAdjust="spacingAndGlyphs">7</tspan><tspan x="990.88" textLength="4.60" lengthAdjust="spacingAndGlyphs">0</tspan></text>
<rect x="970.4" y="396.8" width="46.90" height="17.20" fill="#d6d6d6"/>
<text y="407.80" font-size="10.1" fill="#1a1a1a" stroke="#1a1a1a" stroke-width="0.22" font-weight="bold" font-family="'Liberation Sans','IPAGothic',sans-serif"><tspan x="981.32" textLength="4.60" lengthAdjust="spacingAndGlyphs">3</tspan><tspan x="987.31" textLength="2.30" lengthAdjust="spacingAndGlyphs">,</tspan><tspan x="991.00" textLength="4.60" lengthAdjust="spacingAndGlyphs">7</tspan><tspan x="995.84" textLength="4.60" lengthAdjust="spacingAndGlyphs">2</tspan><tspan x="1000.68" textLength="4.60" lengthAdjust="spacingAndGlyphs">6</tspan></text>
</g>
</svg></div></div>
</body></html>
